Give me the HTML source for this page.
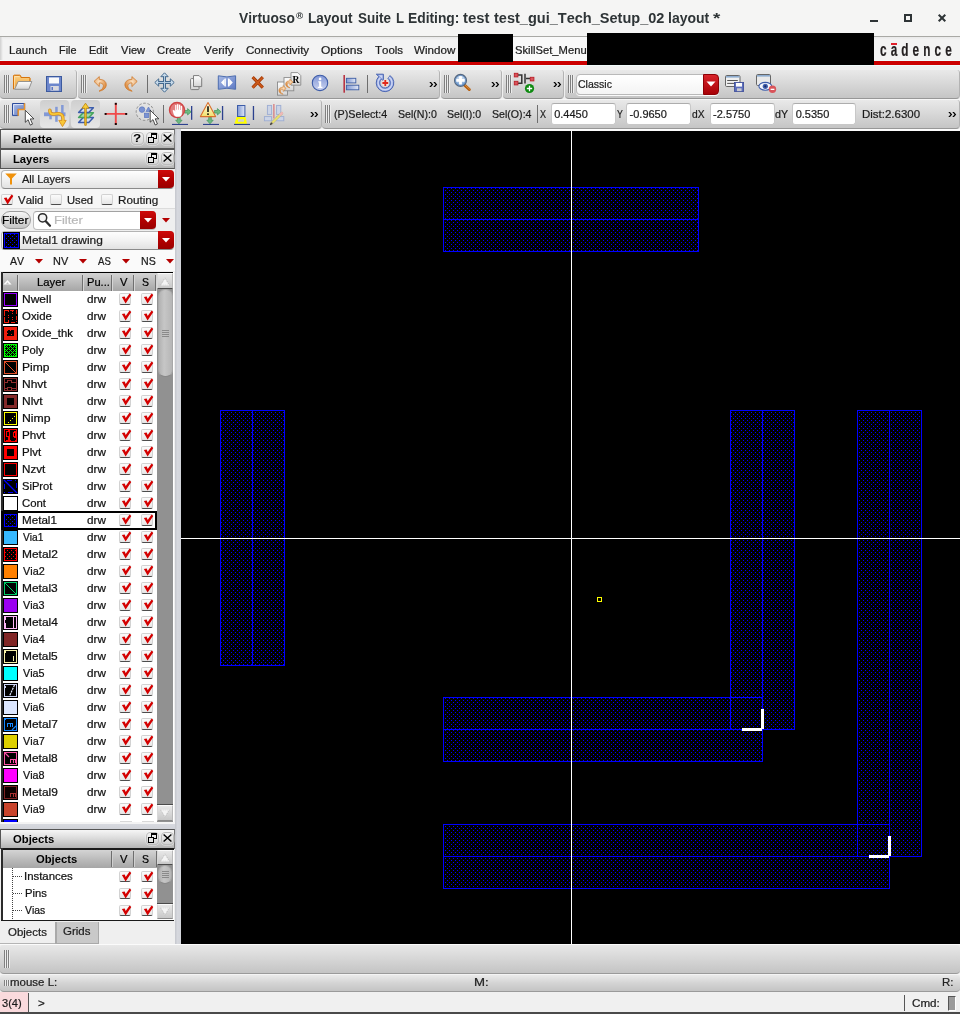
<!DOCTYPE html>
<html><head><meta charset="utf-8"><title>Virtuoso</title>
<style>
*{box-sizing:border-box;margin:0;padding:0}
html,body{width:960px;height:1014px;overflow:hidden;background:#efefef}
body{font-family:"Liberation Sans",sans-serif;font-size:12px;color:#1c1c1c;position:relative;font-kerning:none}
#root{position:absolute;left:0;top:0;width:960px;height:1014px;will-change:transform}
.a{position:absolute}
.t{position:absolute;white-space:nowrap;line-height:16px;height:16px;transform-origin:0 50%;-webkit-text-stroke:0.22px currentColor}
svg{position:absolute;overflow:visible}
</style></head><body><div id="root">
<div class="a" style="left:0px;top:0px;width:960px;height:36px;background:#f5f5f4"></div>
<span class="t" style="left:238.50px;top:10px;font-size:15px;font-weight:bold;-webkit-text-stroke:0;color:#2e3436;transform:scaleX(0.9194);">Virtuoso</span>
<span class="t" style="left:308.19px;top:10px;font-size:15px;font-weight:bold;-webkit-text-stroke:0;color:#2e3436;transform:scaleX(0.9034);">Layout</span>
<span class="t" style="left:357.53px;top:10px;font-size:15px;font-weight:bold;-webkit-text-stroke:0;color:#2e3436;transform:scaleX(0.9000);">Suite</span>
<span class="t" style="left:395.51px;top:10px;font-size:15px;font-weight:bold;-webkit-text-stroke:0;color:#2e3436;transform:scaleX(0.8805);">L</span>
<span class="t" style="left:408.17px;top:10px;font-size:15px;font-weight:bold;-webkit-text-stroke:0;color:#2e3436;transform:scaleX(0.9206);">Editing:</span>
<span class="t" style="left:463.15px;top:10px;font-size:15px;font-weight:bold;-webkit-text-stroke:0;color:#2e3436;transform:scaleX(0.9906);">test</span>
<span class="t" style="left:494.45px;top:10px;font-size:15px;font-weight:bold;-webkit-text-stroke:0;color:#2e3436;transform:scaleX(0.9687);">test_gui_Tech_Setup_02</span>
<span class="t" style="left:667.66px;top:10px;font-size:15px;font-weight:bold;-webkit-text-stroke:0;color:#2e3436;transform:scaleX(0.9329);">layout</span>
<span class="t" style="left:713.30px;top:10px;font-size:15px;font-weight:bold;-webkit-text-stroke:0;color:#2e3436;transform:scaleX(1.2479);">*</span>
<span class="t" style="left:295.90px;top:8px;font-size:9.5px;font-weight:bold;-webkit-text-stroke:0;color:#2e3436;transform:scaleX(1.0234);">®</span>
<svg style="left:860px;top:8px;width:100px;height:20px" viewBox="860 8 100 20"><g stroke="#2e3436" stroke-width="2" fill="none"><path d="M870 20.5h8" shape-rendering="crispEdges"/><rect x="905" y="15" width="6" height="6" shape-rendering="crispEdges"/><path d="M938.7 14.7l6.6 6.6M945.3 14.7l-6.6 6.6"/></g></svg>
<div class="a" style="left:0px;top:36px;width:960px;height:1px;background:#a9a9a5"></div>
<div class="a" style="left:0px;top:37px;width:960px;height:24px;background:linear-gradient(#e9e9e9,#f3f3f3 3px,#f3f3f3)"></div>
<div class="a" style="left:0px;top:37px;width:3px;height:24px;background:linear-gradient(90deg,#cfcfcf,#f3f3f3)"></div>
<span class="t" style="left:9.08px;top:42px;font-size:11px;transform:scaleX(1.0481);">Launch</span>
<span class="t" style="left:58.63px;top:42px;font-size:11px;transform:scaleX(0.9879);">File</span>
<span class="t" style="left:89.13px;top:42px;font-size:11px;transform:scaleX(0.9917);">Edit</span>
<span class="t" style="left:121.00px;top:42px;font-size:11px;transform:scaleX(1.0101);">View</span>
<span class="t" style="left:157.43px;top:42px;font-size:11px;transform:scaleX(1.0274);">Create</span>
<span class="t" style="left:204.00px;top:42px;font-size:11px;transform:scaleX(1.0545);">Verify</span>
<span class="t" style="left:245.62px;top:42px;font-size:11px;transform:scaleX(1.0539);">Connectivity</span>
<span class="t" style="left:320.72px;top:42px;font-size:11px;transform:scaleX(1.0920);">Options</span>
<span class="t" style="left:374.77px;top:42px;font-size:11px;transform:scaleX(1.0447);">Tools</span>
<span class="t" style="left:414.20px;top:42px;font-size:11px;transform:scaleX(1.0546);">Window</span>
<div class="a" style="left:513px;top:37px;width:74px;height:24px;background:#f9f9f9"></div>
<span class="t" style="left:514.55px;top:42px;font-size:11px;transform:scaleX(1.0189);">SkillSet_Menu</span>
<div class="a" style="left:0px;top:60px;width:960px;height:1px;background:#eefcfc"></div>
<div class="a" style="left:0px;top:61px;width:587px;height:4px;background:#cc0000"></div>
<div class="a" style="left:874px;top:61px;width:86px;height:4px;background:#cc0000"></div>
<div class="a" style="left:0px;top:65px;width:960px;height:1px;background:#f0fbfb"></div>
<div class="a" style="left:458px;top:34px;width:55px;height:27.7px;background:#000"></div>
<div class="a" style="left:587px;top:33px;width:287px;height:32px;background:#000"></div>
<span class="t" style="left:880px;top:40px;font-size:19px;font-weight:bold;color:#231f20;letter-spacing:6.6px;transform:scaleX(0.62);line-height:20px;height:20px">cadence</span>
<div class="a" style="left:891px;top:43px;width:6px;height:1.5px;background:#e0202a"></div>
<div class="a" style="left:0px;top:99px;width:960px;height:1px;background:#f6f6f6"></div>
<div class="a" style="left:0px;top:129px;width:960px;height:2px;background:#fbfbfb"></div>
<div class="a" style="left:0px;top:70px;width:77px;height:29px;background:linear-gradient(#e9e9e9,#d9d9d9 45%,#c5c5c5);border-bottom:1px solid #979797;border-right:1px solid #b3b3b3;border-radius:3px 3px 4px 4px;"></div>
<div class="a" style="left:78px;top:70px;width:362px;height:29px;background:linear-gradient(#e9e9e9,#d9d9d9 45%,#c5c5c5);border-bottom:1px solid #979797;border-right:1px solid #b3b3b3;border-radius:3px 3px 4px 4px;"></div>
<div class="a" style="left:441px;top:70px;width:61px;height:29px;background:linear-gradient(#e9e9e9,#d9d9d9 45%,#c5c5c5);border-bottom:1px solid #979797;border-right:1px solid #b3b3b3;border-radius:3px 3px 4px 4px;"></div>
<div class="a" style="left:503px;top:70px;width:61px;height:29px;background:linear-gradient(#e9e9e9,#d9d9d9 45%,#c5c5c5);border-bottom:1px solid #979797;border-right:1px solid #b3b3b3;border-radius:3px 3px 4px 4px;"></div>
<div class="a" style="left:565px;top:70px;width:395px;height:29px;background:linear-gradient(#e9e9e9,#d9d9d9 45%,#c5c5c5);border-bottom:1px solid #979797;border-right:1px solid #b3b3b3;border-radius:3px 3px 4px 4px;"></div>
<div class="a" style="left:0px;top:100px;width:322px;height:29px;background:linear-gradient(#e9e9e9,#d9d9d9 45%,#c5c5c5);border-bottom:1px solid #979797;border-right:1px solid #b3b3b3;border-radius:3px 3px 4px 4px;"></div>
<div class="a" style="left:322px;top:100px;width:638px;height:29px;background:linear-gradient(#e9e9e9,#d9d9d9 45%,#c5c5c5);border-bottom:1px solid #979797;border-right:1px solid #b3b3b3;border-radius:3px 3px 4px 4px;"></div>
<div class="a" style="left:4px;top:75px;width:1px;height:18px;background:#808080"></div><div class="a" style="left:5px;top:75px;width:1px;height:18px;background:#ededed"></div><div class="a" style="left:6px;top:75px;width:1px;height:18px;background:#808080"></div><div class="a" style="left:7px;top:75px;width:1px;height:18px;background:#ededed"></div><div class="a" style="left:8px;top:75px;width:1px;height:18px;background:#808080"></div><div class="a" style="left:9px;top:75px;width:1px;height:18px;background:#ededed"></div>
<div class="a" style="left:81px;top:75px;width:1px;height:18px;background:#808080"></div><div class="a" style="left:82px;top:75px;width:1px;height:18px;background:#ededed"></div><div class="a" style="left:83px;top:75px;width:1px;height:18px;background:#808080"></div><div class="a" style="left:84px;top:75px;width:1px;height:18px;background:#ededed"></div><div class="a" style="left:85px;top:75px;width:1px;height:18px;background:#808080"></div><div class="a" style="left:86px;top:75px;width:1px;height:18px;background:#ededed"></div>
<div class="a" style="left:444px;top:75px;width:1px;height:18px;background:#808080"></div><div class="a" style="left:445px;top:75px;width:1px;height:18px;background:#ededed"></div><div class="a" style="left:446px;top:75px;width:1px;height:18px;background:#808080"></div><div class="a" style="left:447px;top:75px;width:1px;height:18px;background:#ededed"></div><div class="a" style="left:448px;top:75px;width:1px;height:18px;background:#808080"></div><div class="a" style="left:449px;top:75px;width:1px;height:18px;background:#ededed"></div>
<div class="a" style="left:506px;top:75px;width:1px;height:18px;background:#808080"></div><div class="a" style="left:507px;top:75px;width:1px;height:18px;background:#ededed"></div><div class="a" style="left:508px;top:75px;width:1px;height:18px;background:#808080"></div><div class="a" style="left:509px;top:75px;width:1px;height:18px;background:#ededed"></div><div class="a" style="left:510px;top:75px;width:1px;height:18px;background:#808080"></div><div class="a" style="left:511px;top:75px;width:1px;height:18px;background:#ededed"></div>
<div class="a" style="left:568px;top:75px;width:1px;height:18px;background:#808080"></div><div class="a" style="left:569px;top:75px;width:1px;height:18px;background:#ededed"></div><div class="a" style="left:570px;top:75px;width:1px;height:18px;background:#808080"></div><div class="a" style="left:571px;top:75px;width:1px;height:18px;background:#ededed"></div><div class="a" style="left:572px;top:75px;width:1px;height:18px;background:#808080"></div><div class="a" style="left:573px;top:75px;width:1px;height:18px;background:#ededed"></div>
<div class="a" style="left:4px;top:105px;width:1px;height:18px;background:#808080"></div><div class="a" style="left:5px;top:105px;width:1px;height:18px;background:#ededed"></div><div class="a" style="left:6px;top:105px;width:1px;height:18px;background:#808080"></div><div class="a" style="left:7px;top:105px;width:1px;height:18px;background:#ededed"></div><div class="a" style="left:8px;top:105px;width:1px;height:18px;background:#808080"></div><div class="a" style="left:9px;top:105px;width:1px;height:18px;background:#ededed"></div>
<div class="a" style="left:325px;top:105px;width:1px;height:18px;background:#808080"></div><div class="a" style="left:326px;top:105px;width:1px;height:18px;background:#ededed"></div><div class="a" style="left:327px;top:105px;width:1px;height:18px;background:#808080"></div><div class="a" style="left:328px;top:105px;width:1px;height:18px;background:#ededed"></div><div class="a" style="left:329px;top:105px;width:1px;height:18px;background:#808080"></div><div class="a" style="left:330px;top:105px;width:1px;height:18px;background:#ededed"></div>
<svg style="left:429px;top:82px;width:9px;height:6px" viewBox="0 0 9 6"><path d="M0.3 0h1.7l2.2 2.5l-2.2 2.5h-1.7l2.2-2.5z M4.3 0h1.7l2.2 2.5l-2.2 2.5h-1.7l2.2-2.5z" fill="#000"/></svg>
<svg style="left:491px;top:82px;width:9px;height:6px" viewBox="0 0 9 6"><path d="M0.3 0h1.7l2.2 2.5l-2.2 2.5h-1.7l2.2-2.5z M4.3 0h1.7l2.2 2.5l-2.2 2.5h-1.7l2.2-2.5z" fill="#000"/></svg>
<svg style="left:553px;top:82px;width:9px;height:6px" viewBox="0 0 9 6"><path d="M0.3 0h1.7l2.2 2.5l-2.2 2.5h-1.7l2.2-2.5z M4.3 0h1.7l2.2 2.5l-2.2 2.5h-1.7l2.2-2.5z" fill="#000"/></svg>
<svg style="left:310px;top:112px;width:9px;height:6px" viewBox="0 0 9 6"><path d="M0.3 0h1.7l2.2 2.5l-2.2 2.5h-1.7l2.2-2.5z M4.3 0h1.7l2.2 2.5l-2.2 2.5h-1.7l2.2-2.5z" fill="#000"/></svg>
<svg style="left:948px;top:112px;width:9px;height:6px" viewBox="0 0 9 6"><path d="M0.3 0h1.7l2.2 2.5l-2.2 2.5h-1.7l2.2-2.5z M4.3 0h1.7l2.2 2.5l-2.2 2.5h-1.7l2.2-2.5z" fill="#000"/></svg>
<div class="a" style="left:147px;top:75px;width:1px;height:18px;background:#6e6e6e"></div>
<div class="a" style="left:367px;top:75px;width:1px;height:18px;background:#6e6e6e"></div>
<div class="a" style="left:163px;top:105px;width:1px;height:18px;background:#6e6e6e"></div>
<div class="a" style="left:537px;top:105px;width:1px;height:18px;background:#6e6e6e"></div>
<div class="a" style="left:40px;top:100px;width:29px;height:28px;background:linear-gradient(#cfcfcf,#dcdcdc 50%,#e6e6e6);border-radius:4px;"></div>
<div class="a" style="left:71px;top:100px;width:29px;height:28px;background:linear-gradient(#cfcfcf,#dcdcdc 50%,#e6e6e6);border-radius:4px;"></div>
<span class="t" style="left:334.05px;top:106px;font-size:11px;transform:scaleX(0.9783);">(P)Select:4</span>
<span class="t" style="left:397.78px;top:106px;font-size:11px;transform:scaleX(0.9648);">Sel(N):0</span>
<span class="t" style="left:446.58px;top:106px;font-size:11px;transform:scaleX(0.9610);">Sel(I):0</span>
<span class="t" style="left:491.58px;top:106px;font-size:11px;transform:scaleX(0.9637);">Sel(O):4</span>
<span class="t" style="left:540.12px;top:106px;font-size:11px;transform:scaleX(0.8225);">X</span>
<span class="t" style="left:616.83px;top:106px;font-size:11px;transform:scaleX(0.7937);">Y</span>
<span class="t" style="left:692.09px;top:106px;font-size:11px;transform:scaleX(0.9324);">dX</span>
<span class="t" style="left:775.07px;top:106px;font-size:11px;transform:scaleX(0.9713);">dY</span>
<span class="t" style="left:861.58px;top:106px;font-size:11px;transform:scaleX(1.0434);">Dist:2.6300</span>
<div class="a" style="left:550.5px;top:103px;width:65px;height:22px;background:#fff;border:1px solid #c8c8c8;border-top-color:#adadad;border-radius:3px;"></div>
<span class="t" style="left:554.17px;top:106px;font-size:11px;">0.4450</span>
<div class="a" style="left:626px;top:103px;width:65px;height:22px;background:#fff;border:1px solid #c8c8c8;border-top-color:#adadad;border-radius:3px;"></div>
<span class="t" style="left:629.56px;top:106px;font-size:11px;">-0.9650</span>
<div class="a" style="left:709.5px;top:103px;width:65px;height:22px;background:#fff;border:1px solid #c8c8c8;border-top-color:#adadad;border-radius:3px;"></div>
<span class="t" style="left:713.06px;top:106px;font-size:11px;">-2.5750</span>
<div class="a" style="left:792px;top:103px;width:64.2px;height:22px;background:#fff;border:1px solid #c8c8c8;border-top-color:#adadad;border-radius:3px;"></div>
<span class="t" style="left:795.67px;top:106px;font-size:11px;">0.5350</span>
<div class="a" style="left:575.5px;top:73.5px;width:143.5px;height:21px;background:linear-gradient(#fff,#f4f4f4);border:1px solid #b9b9b9;border-radius:4px;box-shadow:0 1px 0 #fafafa"></div>
<div class="a" style="left:703px;top:73.5px;width:16px;height:21px;background:linear-gradient(#d8242a,#a80006);border-radius:0 4px 4px 0;border:1px solid #8e0005"></div>
<svg style="left:706px;top:81px;width:10px;height:6px" viewBox="0 0 10 6"><path d="M0.5 0.5h9l-4.5 5z" fill="#fff"/></svg>
<span class="t" style="left:578.27px;top:76px;font-size:11px;transform:scaleX(0.9582);">Classic</span>
<svg style="left:0;top:66px;width:960px;height:64px" viewBox="0 66 960 64">
<defs>
<linearGradient id="gOr" x1="0" y1="0" x2="0" y2="1"><stop offset="0" stop-color="#fbd48a"/><stop offset="1" stop-color="#ee9a2c"/></linearGradient>
<linearGradient id="gBl" x1="0" y1="0" x2="1" y2="1"><stop offset="0" stop-color="#a9bbe6"/><stop offset="1" stop-color="#5d79c4"/></linearGradient>
<linearGradient id="gBlH" x1="0" y1="0" x2="1" y2="0"><stop offset="0" stop-color="#7f98d4"/><stop offset="1" stop-color="#e2e8f6"/></linearGradient>
<linearGradient id="gPg" x1="0" y1="0" x2="0" y2="1"><stop offset="0" stop-color="#ffffff"/><stop offset="1" stop-color="#d4d4d4"/></linearGradient>
<linearGradient id="gYl" x1="0" y1="0" x2="0" y2="1"><stop offset="0" stop-color="#fffef0"/><stop offset="1" stop-color="#f1e06a"/></linearGradient>
<radialGradient id="gAr" cx="0.4" cy="0.35" r="0.7"><stop offset="0" stop-color="#fbe0c0"/><stop offset="1" stop-color="#d88232"/></radialGradient>
<linearGradient id="gLens" x1="0" y1="0" x2="0" y2="1"><stop offset="0" stop-color="#e6eef8"/><stop offset="1" stop-color="#6f9bd0"/></linearGradient>
<linearGradient id="gInfo" x1="0" y1="0" x2="0" y2="1"><stop offset="0" stop-color="#8096d6"/><stop offset="1" stop-color="#cdd5f0"/></linearGradient>
<g id="undo"><path d="M94 81.4L99.3 76.6L99.3 79.4C104.6 79.3 106.8 82.6 106.2 85.8C105.6 88.8 102.6 90.7 99 91.2C102.4 89.3 103.6 87.4 103.4 85.6C103.1 83.6 101.6 82.9 99.3 82.9L99.3 86.6Z" fill="url(#gAr)" stroke="#cf7a2c" stroke-width="0.8"/></g>
<g id="cursor"><path d="M0 0V12L2.8 9.4L5 14.8L7.2 13.8L5 8.6H8.6Z" fill="#fff" stroke="#1a1a1a" stroke-width="0.75" stroke-linejoin="round"/></g>
<g id="garr"><path d="M0 -1.3h3v-1.9l3.6 3.2l-3.6 3.2v-1.9h-3z" fill="#6dba82" stroke="#3f9458" stroke-width="0.7"/></g>
</defs>
<!-- folder -->
<path d="M13.5 89V76.2q0-0.9 0.9-0.9h5.2q0.8 0 1 0.8l0.4 1.4h8q0.9 0 0.9 0.9V81" fill="url(#gOr)" stroke="#d6740c" stroke-width="1"/>
<path d="M13.5 89V76.2q0-0.9 0.9-0.9h5.2q0.8 0 1 0.8l0.4 1.4h8q0.9 0 0.9 0.9V82H18z" fill="url(#gOr)"/>
<path d="M18.2 81.5H31.8L28.8 89.3H14.6Z" fill="url(#gPg)" stroke="#8a8a8a" stroke-width="0.9"/>
<path d="M13.5 89.3V76.2q0-0.9 0.9-0.9h5.2q0.8 0 1 0.8l0.4 1.4h8q0.9 0 0.9 0.9V81" stroke="#d6740c" stroke-width="1" fill="none"/><path d="M14.6 88V76.6h4.8" stroke="#fde6b8" stroke-width="0.8" fill="none"/>
<!-- floppy -->
<rect x="46.5" y="76.5" width="15" height="15" fill="#6c86cc" stroke="#3c5a9e" stroke-width="1"/>
<rect x="49" y="77.5" width="10" height="6" fill="#fafafa"/>
<rect x="50.5" y="86" width="8.3" height="4.6" fill="#d9d9de"/>
<rect x="51.5" y="87" width="1.5" height="3" fill="#5a74c4"/>
<!-- undo / redo -->
<use href="#undo"/>
<use href="#undo" transform="translate(231.2 0) scale(-1 1)"/>
<!-- move -->
<g stroke="#44698e" stroke-width="3" fill="none" stroke-linecap="butt"><path d="M164.5 75.5V89.5M157.5 82.5H171.5"/></g>
<path d="M164.5 72.8l3.7 3.9h-7.4zM164.5 92.2l3.7-3.9h-7.4zM154.8 82.5l3.9-3.7v7.4zM174.2 82.5l-3.9-3.7v7.4z" fill="#cfe0ee" stroke="#44698e" stroke-width="1"/>
<g stroke="#b5cde2" stroke-width="1" fill="none"><path d="M164.5 75.5V89.5M157.5 82.5H171.5"/></g>
<!-- copy -->
<rect x="190.6" y="78.6" width="8.4" height="11" rx="0.8" fill="url(#gPg)" stroke="#7d7d7d" stroke-width="1"/>
<path d="M193.5 75.6h5.6l2.6 2.6v8.4h-8.2z" fill="url(#gPg)" stroke="#7d7d7d" stroke-width="1"/>
<!-- stretch -->
<path d="M218.3 75.8Q227 78 235.6 75.8V89.3Q227 87.2 218.3 89.3Z" fill="url(#gBl)" stroke="#4c6cae" stroke-width="1"/>
<path d="M221 82.5l3.7-3.9v7.8zM232.8 82.5l-3.7-3.9v7.8z" fill="#fff"/>
<path d="M225.3 78.4v8.2M228.5 78.4v8.2" stroke="#fff" stroke-width="1.1"/>
<!-- delete X -->
<path d="M252.6 77.2l10.2 10.4M262.8 77.2l-10.2 10.4" stroke="#a23806" stroke-width="3.1" stroke-linecap="butt"/>
<path d="M252.6 77.2l10.2 10.4M262.8 77.2l-10.2 10.4" stroke="#cc5a1a" stroke-width="1.5" stroke-linecap="butt"/>
<!-- repeat -->
<rect x="277.5" y="82" width="10" height="13.2" fill="url(#gPg)" stroke="#8a8a8a" stroke-width="0.9"/>
<rect x="284" y="77.6" width="9.8" height="13.2" fill="url(#gPg)" stroke="#8a8a8a" stroke-width="0.9"/>
<path d="M291 72.6h6.8l3 3v9.6h-9.8z" fill="url(#gPg)" stroke="#8a8a8a" stroke-width="0.9"/>
<text x="292.6" y="82.7" font-family="Liberation Serif" font-weight="bold" font-size="9.5" fill="#000">R</text>
<use href="#undo" transform="translate(286.2 88.4) scale(-0.6 0.6) translate(-94 -81.4)"/>
<use href="#undo" transform="translate(293 82) scale(-0.6 0.6) translate(-94 -81.4)"/>
<!-- info -->
<circle cx="320" cy="82.9" r="7.7" fill="url(#gInfo)" stroke="#3d5ca8" stroke-width="1.1"/>
<circle cx="320.1" cy="78.9" r="1.35" fill="#fff"/>
<path d="M318.3 81.2h2.9v5.6h1.2v1.2h-4.6v-1.2h1.3v-4.4h-0.8z" fill="#fff"/>
<!-- align -->
<rect x="343.4" y="75" width="1.6" height="17.7" fill="#b83444"/>
<rect x="346.4" y="78.3" width="9.4" height="4.6" fill="url(#gBlH)" stroke="#3c5ca4" stroke-width="0.9"/>
<rect x="346.4" y="85.2" width="12.4" height="4.6" fill="url(#gBlH)" stroke="#3c5ca4" stroke-width="0.9"/>
<!-- rotate -->
<path d="M378.8 76.6A8.8 8.8 0 1 0 390.05 75.6L387.98 78.54A5.2 5.2 0 1 1 381.3 79.1L383.4 81L383.4 74.2L376.3 74.2Z" fill="#8fa2dd" stroke="#3f5cae" stroke-width="0.9" stroke-linejoin="round"/>
<path d="M380.1 77.9A7 7 0 1 0 389 77.1" fill="none" stroke="#cdd6f4" stroke-width="1.5"/>
<path d="M378.6 75.2h3.8v3.6z" fill="#cdd6f4"/>
<circle cx="385.3" cy="83" r="3.4" fill="#fbe4de" opacity="0.8"/>
<path d="M385.3 80.1v5.8M382.4 83h5.8" stroke="#e0281c" stroke-width="1.8"/>
<!-- magnifier -->
<path d="M464.8 85.4l4.6 4.2" stroke="#b85e0c" stroke-width="2.8" stroke-linecap="round"/><path d="M465.2 85.2l4.4 4" stroke="#e09a50" stroke-width="0.8" stroke-linecap="round"/>
<circle cx="460.5" cy="80.4" r="5.9" fill="url(#gLens)" stroke="#566880" stroke-width="1.3"/>
<circle cx="460.5" cy="80.4" r="4.9" fill="none" stroke="#5d8cc4" stroke-width="0.9"/>
<path d="M460.5 76.2v8.4M456.3 80.4h8.4" stroke="#fff" stroke-width="2.8"/>
<!-- connect -->
<g fill="none" stroke="#333" stroke-width="1.5"><path d="M518 75h3.8v8.3H518M525 73.8v9.8M526 78.6h4"/></g>
<g fill="#d8555c" stroke="#bb2029" stroke-width="0.9"><rect x="514.3" y="73.3" width="3.6" height="3.6"/><rect x="514.3" y="81.3" width="3.6" height="3.6"/><rect x="530.3" y="77.3" width="3.6" height="3.6"/></g>
<circle cx="529.5" cy="88.5" r="4.6" fill="#0d8a10"/>
<path d="M529.5 85.8v5.4M526.8 88.5h5.4" stroke="#fff" stroke-width="1.3"/>
<!-- save window -->
<rect x="725.5" y="75.5" width="14.5" height="11" rx="1.2" fill="#f0f0f0" stroke="#666" stroke-width="1"/>
<rect x="726" y="76" width="13.5" height="1.6" fill="#8eaccf"/>
<path d="M727.2 80.5h10.6M727.2 83.4h8" stroke="#555" stroke-width="1"/>
<rect x="734.4" y="82.4" width="9.2" height="9.2" fill="#5c6ebc" stroke="#3b4c96" stroke-width="0.8"/>
<rect x="736" y="83" width="6" height="3.6" fill="#fbfbfb"/>
<rect x="737" y="88.3" width="4.6" height="2.8" fill="#c9c9cf"/>
<!-- eye window -->
<rect x="756.5" y="74.5" width="14" height="11" rx="1.2" fill="#e9e9e9" stroke="#666" stroke-width="1"/>
<rect x="757" y="75" width="13" height="1.6" fill="#8eaccf"/>
<ellipse cx="765.3" cy="86.3" rx="6.4" ry="3.9" fill="#f4f6fc" stroke="#3d5cab" stroke-width="1.1"/>
<circle cx="765.3" cy="86.3" r="2.6" fill="#3f5eae"/>
<circle cx="765.3" cy="86.3" r="1.1" fill="#1d2b5e"/>
<circle cx="772.5" cy="89.3" r="3.7" fill="#d9545a"/>
<rect x="770.6" y="88.7" width="3.8" height="1.3" fill="#fff"/>
<!-- ROW 2 -->
<!-- select -->
<path d="M12.5 103.5H24.6V109.4H18.2V115.6H12.5Z" fill="url(#gBl)" stroke="#2c4c9c" stroke-width="1"/>
<path d="M24.5 103.3V109.4H18.2V115.8" fill="none" stroke="#e8932c" stroke-width="1.5"/><path d="M13.6 114.4V104.6H23" fill="none" stroke="#e6ecfa" stroke-width="0.9"/>
<use href="#cursor" transform="translate(25.3 110.3)"/>
<!-- route -->
<g fill="#8299d6"><rect x="44" y="112.4" width="21.5" height="3.8"/><rect x="49.3" y="109.6" width="2.5" height="9.7"/><rect x="55.2" y="106.8" width="2.5" height="15"/><rect x="61.1" y="105" width="2.5" height="14.6"/></g>
<path d="M49.8 110.2C49.6 112.6 50.8 114 53 114.2C55.4 114.4 57.2 113.4 59.6 113.8C62.6 114.3 63.4 116.8 63 120.6" fill="none" stroke="#d8901e" stroke-width="3.3" stroke-linecap="round"/>
<path d="M58.8 120.4h7.4l-3.7 6.2z" fill="#f9c838" stroke="#d8901e" stroke-width="0.9" stroke-linejoin="round"/>
<path d="M49.8 110.2C49.6 112.6 50.8 114 53 114.2C55.4 114.4 57.2 113.4 59.6 113.8C62.6 114.3 63.4 116.8 63 121" fill="none" stroke="#f9c838" stroke-width="1.7" stroke-linecap="round"/>
<!-- layers -->
<path d="M78.6 122.5L83.2 117.6H93.4L88.8 122.5Z" fill="#d6def4" stroke="#3b5cab" stroke-width="1.5" stroke-linejoin="round"/>
<path d="M78.6 117.6L83.2 112.7H93.4L88.8 117.6Z" fill="#9fd8ae" stroke="#46a45e" stroke-width="1.5" stroke-linejoin="round"/>
<path d="M78.6 112.6L83.2 107.8H93.4L88.8 112.6Z" fill="#d6def4" stroke="#3b5cab" stroke-width="1.5" stroke-linejoin="round"/>
<path d="M84.7 125.3V108.2H82L85.5 103.2L89 108.2H86.3V125.3Z" fill="#f9cc34" stroke="#b8820c" stroke-width="0.8" stroke-linejoin="round"/>
<!-- red cross -->
<path d="M105 113.9H126.7M115.8 103V124.7" stroke="#f04a4a" stroke-width="1.9"/>
<g fill="#1a0505"><rect x="104.6" y="113" width="2" height="1.9"/><rect x="125.2" y="113" width="2" height="1.9"/><rect x="114.8" y="102.8" width="2" height="2"/><rect x="114.8" y="123" width="2" height="2"/></g>
<!-- select by area -->
<circle cx="144.8" cy="111.8" r="8.6" fill="#e2e2e2" fill-opacity="0.6" stroke="#858585" stroke-width="0.9" stroke-dasharray="2.6 1.7"/>
<circle cx="142" cy="109.6" r="2.8" fill="#7a92d2" stroke="#5672bc" stroke-width="0.6"/>
<path d="M148.5 107l2.6 4.5h-5.2z" fill="#7a92d2" stroke="#5672bc" stroke-width="0.6"/>
<rect x="144.3" y="113.1" width="4.5" height="4.6" fill="#7a92d2" stroke="#5672bc" stroke-width="0.6"/>
<use href="#cursor" transform="translate(150.2 110.2)"/>
<!-- stop -->
<use href="#garr" transform="translate(184.6 111.8)"/>
<use href="#garr" transform="translate(178.9 117.2) rotate(90)"/>
<circle cx="177" cy="110" r="7.5" fill="#e27c7c" stroke="#cf4444" stroke-width="1.4"/>
<g transform="translate(177 110.4) scale(1.15) translate(-177 -110.4)"><path d="M173.2 110.4l1.2-0.6l1 1.6v-5.6h1.1v4h0.5v-4.8h1.1v4.8h0.5v-4.4h1.1v4.6h0.5v-3.4h1.1v6.2q0 2.6-2.4 3.2h-2.6q-1.4-0.4-2.2-2.2z" fill="#fff"/></g>
<rect x="172" y="123.9" width="16" height="1.1" fill="#2c418e"/>
<rect x="191" y="106" width="1.3" height="13.8" fill="#2c418e"/>
<!-- warning -->
<use href="#garr" transform="translate(214.4 111.8)"/>
<use href="#garr" transform="translate(210 117.2) rotate(90)"/>
<path d="M208 102.6L215.6 116.6H200.4Z" fill="url(#gYl)" stroke="#d9702e" stroke-width="1.1" stroke-linejoin="round"/>
<path d="M208 106.2v5.8" stroke="#000" stroke-width="1.5"/><rect x="207.2" y="113.4" width="1.6" height="1.5" fill="#000"/>
<rect x="203" y="123.9" width="16" height="1.1" fill="#2c418e"/>
<rect x="221.9" y="106" width="1.3" height="14" fill="#2c418e"/>
<!-- blue rect + yellow -->
<rect x="237.5" y="105.5" width="7.4" height="11" fill="url(#gBlH)" stroke="#3c5ca8" stroke-width="1"/>
<path d="M236.5 117H245.5L247 123.8H234.6Z M238 119.3V121.8H244V119.3Z" fill="#ffff00" fill-rule="evenodd"/>
<rect x="234" y="123.9" width="16" height="1.1" fill="#2c418e"/>
<rect x="252.8" y="106" width="1.3" height="14" fill="#2c418e"/>
<!-- disabled align -->
<g fill="#ccd4e6" stroke="#9cacd2" stroke-width="0.9"><rect x="267.4" y="105.4" width="4.2" height="9"/><rect x="276.6" y="105.4" width="4.2" height="9"/><rect x="264.4" y="116.6" width="7.2" height="4.2"/><rect x="276.6" y="116.6" width="7.2" height="4.2"/></g>
<rect x="273.1" y="104" width="1.5" height="14.4" fill="#d98a8c"/>
<path d="M271.2 123.8L281.8 113.2" stroke="#b9b18c" stroke-width="2.8" stroke-linecap="round"/>
<path d="M272.4 122.6L280.4 114.6" stroke="#ebe36a" stroke-width="1.8"/>
<path d="M280.4 114.6L281.9 113.1" stroke="#f0b8b8" stroke-width="2.4" stroke-linecap="round"/>
<path d="M270.7 124.3l1-1" stroke="#444" stroke-width="1.6" stroke-linecap="round"/>
</svg>

<div class="a" style="left:0px;top:129px;width:175px;height:815px;background:#efefef"></div>
<div class="a" style="left:175px;top:129px;width:6px;height:815px;background:linear-gradient(90deg,#c4c6cc,#d6d8de 40%,#d2d4da)"></div>
<div class="a" style="left:0px;top:129px;width:175px;height:20px;background:linear-gradient(#f6f6f6,#dcdcdc 45%,#b4b4b4);border:1px solid #555;border-right-color:#777;"></div><span class="t" style="left:12.78px;top:131px;font-size:11px;font-weight:bold;-webkit-text-stroke:0;color:#000;transform:scaleX(1.0886);">Palette</span><div class="a" style="left:130.5px;top:131.5px;width:13px;height:13px;background:linear-gradient(#f4f4f4,#d4d4d4);border:1px solid #bcbcbc;border-radius:4px;box-shadow:0 0 0 0.5px rgba(255,255,255,.6)"></div><span class="t" style="left:133.06px;top:130px;font-size:11px;font-weight:bold;-webkit-text-stroke:0;color:#000;transform:scaleX(1.2238);">?</span><div class="a" style="left:145.5px;top:131.5px;width:13px;height:13px;background:linear-gradient(#f4f4f4,#d4d4d4);border:1px solid #bcbcbc;border-radius:4px;box-shadow:0 0 0 0.5px rgba(255,255,255,.6)"></div><svg style="left:148px;top:133px;width:9px;height:10px" viewBox="0 0 9 10" shape-rendering="crispEdges"><g fill="none" stroke="#000"><rect x="3" y="1" width="5" height="4.5"/><path d="M2.5 0.5h6"/><rect x="0.5" y="4.5" width="5" height="4.5" fill="#e6e6e6"/><path d="M0 4h6"/></g></svg><div class="a" style="left:160.5px;top:131.5px;width:13px;height:13px;background:linear-gradient(#f4f4f4,#d4d4d4);border:1px solid #bcbcbc;border-radius:4px;box-shadow:0 0 0 0.5px rgba(255,255,255,.6)"></div><svg style="left:162.6px;top:134px;width:9px;height:8px" viewBox="0 0 9 8"><path d="M0.6 0.4L8.4 7.6M8.4 0.4L0.6 7.6" stroke="#000" stroke-width="1.4" fill="none"/></svg>
<div class="a" style="left:0px;top:149px;width:175px;height:20px;background:linear-gradient(#f6f6f6,#dcdcdc 45%,#b4b4b4);border:1px solid #555;border-right-color:#777;"></div><span class="t" style="left:12.83px;top:151px;font-size:11px;font-weight:bold;-webkit-text-stroke:0;color:#000;transform:scaleX(1.0224);">Layers</span><div class="a" style="left:145.5px;top:151.5px;width:13px;height:13px;background:linear-gradient(#f4f4f4,#d4d4d4);border:1px solid #bcbcbc;border-radius:4px;box-shadow:0 0 0 0.5px rgba(255,255,255,.6)"></div><svg style="left:148px;top:153px;width:9px;height:10px" viewBox="0 0 9 10" shape-rendering="crispEdges"><g fill="none" stroke="#000"><rect x="3" y="1" width="5" height="4.5"/><path d="M2.5 0.5h6"/><rect x="0.5" y="4.5" width="5" height="4.5" fill="#e6e6e6"/><path d="M0 4h6"/></g></svg><div class="a" style="left:160.5px;top:151.5px;width:13px;height:13px;background:linear-gradient(#f4f4f4,#d4d4d4);border:1px solid #bcbcbc;border-radius:4px;box-shadow:0 0 0 0.5px rgba(255,255,255,.6)"></div><svg style="left:162.6px;top:154px;width:9px;height:8px" viewBox="0 0 9 8"><path d="M0.6 0.4L8.4 7.6M8.4 0.4L0.6 7.6" stroke="#000" stroke-width="1.4" fill="none"/></svg>
<div class="a" style="left:1px;top:170px;width:173px;height:18.5px;background:linear-gradient(#fefefe,#f2f2f2 50%,#e2e2e2);border:1px solid #b4b4b4;border-bottom-color:#8a8a8a;border-radius:4px"></div>
<div class="a" style="left:158px;top:170.2px;width:16px;height:18px;background:linear-gradient(#cf0a0a,#b00000 55%,#9a0000);border-radius:0 4px 4px 0"></div><svg style="left:162px;top:177px;width:8px;height:5px" viewBox="0 0 8 5"><path d="M0 0h8l-4 4.6z" fill="#fff"/></svg>
<svg style="left:5px;top:173px;width:12px;height:12px" viewBox="0 0 12 12"><path d="M0.2 0.4H11.8L7 5.6V11.6L5 11.6V5.6Z" fill="#f0920c"/></svg>
<span class="t" style="left:22.20px;top:171px;font-size:11px;transform:scaleX(0.9987);">All Layers</span>
<div class="a" style="left:0px;top:189px;width:175px;height:20px;background:#f6f6f6;border-bottom:1px solid #dcdcdc"></div>
<div class="a" style="left:1px;top:193.8px;width:12px;height:11.5px;background:linear-gradient(#fbfbfb,#e6e6e6);border:1px solid #d2d2d2;border-bottom:1.5px solid #4c4c4c;border-radius:2px"></div><svg style="left:1px;top:193.8px;width:13px;height:11px" viewBox="0 0 13 11"><path d="M2.9 4.1L5.7 3.5L6.7 6.1L10.6 0.5L12.3 1.9L6.6 10.4Z" fill="#d40000"/></svg>
<span class="t" style="left:18.30px;top:192px;font-size:11px;transform:scaleX(1.0396);">Valid</span>
<div class="a" style="left:49.7px;top:193.8px;width:12px;height:11.5px;background:linear-gradient(#fbfbfb,#e6e6e6);border:1px solid #d2d2d2;border-bottom:1.5px solid #4c4c4c;border-radius:2px"></div>
<span class="t" style="left:66.72px;top:192px;font-size:11px;transform:scaleX(1.0160);">Used</span>
<div class="a" style="left:100.6px;top:193.8px;width:12px;height:11.5px;background:linear-gradient(#fbfbfb,#e6e6e6);border:1px solid #d2d2d2;border-bottom:1.5px solid #4c4c4c;border-radius:2px"></div>
<span class="t" style="left:117.56px;top:192px;font-size:11px;transform:scaleX(1.0629);">Routing</span>
<div class="a" style="left:0.5px;top:210.8px;width:30px;height:18px;background:linear-gradient(#f6f6f6,#dedede 50%,#c4c4c4);border:1px solid #9c9c9c;border-radius:9px"></div>
<span class="t" style="left:1.85px;top:212px;font-size:11px;color:#000;transform:scaleX(1.0798);">Filter</span>
<div class="a" style="left:33.3px;top:210.5px;width:123px;height:19px;background:#fff;border:1px solid #bdbdbd;border-top-color:#a2a2a2;border-radius:4px"></div>
<svg style="left:36px;top:211px;width:17px;height:17px" viewBox="36 211 17 17"><circle cx="42.6" cy="217.8" r="4.1" fill="#f4f4f4" stroke="#2e2e2e" stroke-width="1.5"/><path d="M45.8 221.2L50 225.8" stroke="#2e2e2e" stroke-width="2.2" stroke-linecap="round"/></svg>
<span class="t" style="left:53.76px;top:212px;font-size:11px;color:#b9b9b9;transform:scaleX(1.1822);">Filter</span>
<div class="a" style="left:140px;top:211px;width:16px;height:18.2px;background:linear-gradient(#cf0a0a,#b00000 55%,#9a0000);border-radius:0 4px 4px 0"></div><svg style="left:144px;top:217.9px;width:8px;height:5px" viewBox="0 0 8 5"><path d="M0 0h8l-4 4.6z" fill="#fff"/></svg>
<svg style="left:162px;top:218px;width:8px;height:5px" viewBox="0 0 8 5"><path d="M0 0h8l-4 4.4z" fill="#b40000"/></svg>
<div class="a" style="left:1px;top:231px;width:173px;height:18.5px;background:linear-gradient(#fefefe,#f2f2f2 50%,#e2e2e2);border:1px solid #b4b4b4;border-bottom-color:#8a8a8a;border-radius:4px"></div>
<div class="a" style="left:158px;top:231.3px;width:16px;height:18px;background:linear-gradient(#cf0a0a,#b00000 55%,#9a0000);border-radius:0 4px 4px 0"></div><svg style="left:162px;top:238.1px;width:8px;height:5px" viewBox="0 0 8 5"><path d="M0 0h8l-4 4.6z" fill="#fff"/></svg>
<svg style="left:3px;top:232px;width:17px;height:17px" viewBox="3 232 17 17" shape-rendering="crispEdges"><rect x="3" y="232" width="17" height="17" fill="#000"/><rect x="4.5" y="233.5" width="14" height="14" fill="url(#stA)" stroke="#00f"/></svg>
<span class="t" style="left:22.45px;top:232px;font-size:11px;transform:scaleX(1.0843);">Metal1 drawing</span>
<div class="a" style="left:0px;top:250px;width:175px;height:21px;background:#fafafa"></div>
<span class="t" style="left:10.10px;top:253px;font-size:11px;transform:scaleX(0.9596);">AV</span>
<svg style="left:35px;top:259px;width:8px;height:5px" viewBox="0 0 8 5"><path d="M0 0h8l-4 4.4z" fill="#b40000"/></svg>
<span class="t" style="left:52.83px;top:253px;font-size:11px;transform:scaleX(0.9924);">NV</span>
<svg style="left:79.2px;top:259px;width:8px;height:5px" viewBox="0 0 8 5"><path d="M0 0h8l-4 4.4z" fill="#b40000"/></svg>
<span class="t" style="left:98.00px;top:253px;font-size:11px;transform:scaleX(0.8741);">AS</span>
<svg style="left:122px;top:259px;width:8px;height:5px" viewBox="0 0 8 5"><path d="M0 0h8l-4 4.4z" fill="#b40000"/></svg>
<span class="t" style="left:140.65px;top:253px;font-size:11px;transform:scaleX(0.9664);">NS</span>
<svg style="left:166px;top:259px;width:8px;height:5px" viewBox="0 0 8 5"><path d="M0 0h8l-4 4.4z" fill="#b40000"/></svg>
<div class="a" style="left:1px;top:272px;width:173px;height:550px;background:#fff"></div>
<div class="a" style="left:1px;top:272px;width:172px;height:1px;background:#000"></div>
<div class="a" style="left:1px;top:272px;width:1.5px;height:550px;background:#2a2a2a"></div>
<div class="a" style="left:2.5px;top:273px;width:154.5px;height:18px;background:linear-gradient(#d4d4d4,#bcbcbc 50%,#a6a6a6);"></div>
<div class="a" style="left:17px;top:275px;width:1px;height:16px;background:#707070"></div><div class="a" style="left:18px;top:275px;width:1px;height:16px;background:#d6d6d6"></div>
<div class="a" style="left:82px;top:275px;width:1px;height:16px;background:#707070"></div><div class="a" style="left:83px;top:275px;width:1px;height:16px;background:#d6d6d6"></div>
<div class="a" style="left:111px;top:275px;width:1px;height:16px;background:#707070"></div><div class="a" style="left:112px;top:275px;width:1px;height:16px;background:#d6d6d6"></div>
<div class="a" style="left:133px;top:275px;width:1px;height:16px;background:#707070"></div><div class="a" style="left:134px;top:275px;width:1px;height:16px;background:#d6d6d6"></div>
<div class="a" style="left:155px;top:275px;width:1px;height:16px;background:#707070"></div><div class="a" style="left:156px;top:275px;width:1px;height:16px;background:#d6d6d6"></div>
<svg style="left:3px;top:279px;width:9px;height:6px" viewBox="0 0 9 6"><path d="M0.4 5.4L4.5 0.9L8.6 5.4Z" fill="#fdfdfd"/><path d="M2.6 5.4L4.5 3.3L6.4 5.4Z" fill="#c4c4c4"/></svg>
<span class="t" style="left:36.60px;top:274px;font-size:11px;color:#000;transform:scaleX(1.0260);">Layer</span>
<span class="t" style="left:86.61px;top:274px;font-size:11px;color:#000;transform:scaleX(1.0101);">Pu...</span>
<span class="t" style="left:119.50px;top:274px;font-size:11px;color:#000;transform:scaleX(1.0176);">V</span>
<span class="t" style="left:142.08px;top:274px;font-size:11px;color:#000;transform:scaleX(0.9553);">S</span>
<div class="a" style="left:157px;top:273px;width:16px;height:549px;background:#919191"></div>
<div class="a" style="left:157px;top:273px;width:16px;height:16px;background:linear-gradient(#e8e8e8,#c8c8c8);border-top:1px solid #fafafa;border-left:1px solid #d8d8d8;border-right:1px solid #b8b8b8;border-bottom:1px solid #4a4a4a;"></div>
<svg style="left:160px;top:277px;width:10px;height:9px" viewBox="0 0 10 9"><path d="M0.8 8L5 0.9L9.2 8Z" fill="#f4f4f4" stroke="#a8a8a8" stroke-width="0.7" stroke-dasharray="1 1"/><path d="M0.8 8H9.2" stroke="#f8f8f8" stroke-width="0.9"/></svg>
<div class="a" style="left:157px;top:805px;width:16px;height:16px;background:linear-gradient(#e8e8e8,#c8c8c8);border-top:1px solid #fafafa;border-left:1px solid #d8d8d8;border-right:1px solid #b8b8b8;border-bottom:1px solid #8a8a8a;box-shadow:0 -1px 0 #4a4a4a;"></div>
<svg style="left:160px;top:809px;width:10px;height:9px" viewBox="0 0 10 9"><path d="M0.8 1L5 8.1L9.2 1Z" fill="#f4f4f4" stroke="#a8a8a8" stroke-width="0.7" stroke-dasharray="1 1"/><path d="M0.8 1H9.2" stroke="#f8f8f8" stroke-width="0.9"/></svg>
<div class="a" style="left:158px;top:289px;width:14.5px;height:88px;background:linear-gradient(90deg,#b2b2b2,#c6c6c6 40%,#b6b6b6);border-radius:7px;border:1px solid #a8a8a8;border-bottom-color:#888"></div>
<div class="a" style="left:161.5px;top:329.5px;width:7px;height:1px;background:#8a8a8a"></div>
<div class="a" style="left:161.5px;top:331.5px;width:7px;height:1px;background:#8a8a8a"></div>
<div class="a" style="left:161.5px;top:333.5px;width:7px;height:1px;background:#8a8a8a"></div>
<div class="a" style="left:161.5px;top:335.5px;width:7px;height:1px;background:#8a8a8a"></div>
<div class="a" style="left:1px;top:511px;width:156px;height:19px;border:2px solid #000;background:#fff"></div>
<div class="a" style="left:1px;top:511px;width:4px;height:19px;background:#000"></div>
<span class="t" style="left:21.54px;top:291px;font-size:11px;color:#111;transform:scaleX(1.0909);">Nwell</span>
<span class="t" style="left:87.03px;top:291px;font-size:11px;color:#111;transform:scaleX(1.0644);">drw</span>
<div class="a" style="left:119.2px;top:293.3px;width:12px;height:11.5px;background:linear-gradient(#fbfbfb,#e6e6e6);border:1px solid #d2d2d2;border-bottom:1.5px solid #4c4c4c;border-radius:2px"></div><svg style="left:119.2px;top:293.3px;width:13px;height:11px" viewBox="0 0 13 11"><path d="M2.9 4.1L5.7 3.5L6.7 6.1L10.6 0.5L12.3 1.9L6.6 10.4Z" fill="#d40000"/></svg>
<div class="a" style="left:141.2px;top:293.3px;width:12px;height:11.5px;background:linear-gradient(#fbfbfb,#e6e6e6);border:1px solid #d2d2d2;border-bottom:1.5px solid #4c4c4c;border-radius:2px"></div><svg style="left:141.2px;top:293.3px;width:13px;height:11px" viewBox="0 0 13 11"><path d="M2.9 4.1L5.7 3.5L6.7 6.1L10.6 0.5L12.3 1.9L6.6 10.4Z" fill="#d40000"/></svg>
<span class="t" style="left:22.04px;top:308px;font-size:11px;color:#111;transform:scaleX(1.0379);">Oxide</span>
<span class="t" style="left:87.03px;top:308px;font-size:11px;color:#111;transform:scaleX(1.0644);">drw</span>
<div class="a" style="left:119.2px;top:310.3px;width:12px;height:11.5px;background:linear-gradient(#fbfbfb,#e6e6e6);border:1px solid #d2d2d2;border-bottom:1.5px solid #4c4c4c;border-radius:2px"></div><svg style="left:119.2px;top:310.3px;width:13px;height:11px" viewBox="0 0 13 11"><path d="M2.9 4.1L5.7 3.5L6.7 6.1L10.6 0.5L12.3 1.9L6.6 10.4Z" fill="#d40000"/></svg>
<div class="a" style="left:141.2px;top:310.3px;width:12px;height:11.5px;background:linear-gradient(#fbfbfb,#e6e6e6);border:1px solid #d2d2d2;border-bottom:1.5px solid #4c4c4c;border-radius:2px"></div><svg style="left:141.2px;top:310.3px;width:13px;height:11px" viewBox="0 0 13 11"><path d="M2.9 4.1L5.7 3.5L6.7 6.1L10.6 0.5L12.3 1.9L6.6 10.4Z" fill="#d40000"/></svg>
<span class="t" style="left:22.05px;top:325px;font-size:11px;color:#111;transform:scaleX(1.0270);">Oxide_thk</span>
<span class="t" style="left:87.03px;top:325px;font-size:11px;color:#111;transform:scaleX(1.0644);">drw</span>
<div class="a" style="left:119.2px;top:327.3px;width:12px;height:11.5px;background:linear-gradient(#fbfbfb,#e6e6e6);border:1px solid #d2d2d2;border-bottom:1.5px solid #4c4c4c;border-radius:2px"></div><svg style="left:119.2px;top:327.3px;width:13px;height:11px" viewBox="0 0 13 11"><path d="M2.9 4.1L5.7 3.5L6.7 6.1L10.6 0.5L12.3 1.9L6.6 10.4Z" fill="#d40000"/></svg>
<div class="a" style="left:141.2px;top:327.3px;width:12px;height:11.5px;background:linear-gradient(#fbfbfb,#e6e6e6);border:1px solid #d2d2d2;border-bottom:1.5px solid #4c4c4c;border-radius:2px"></div><svg style="left:141.2px;top:327.3px;width:13px;height:11px" viewBox="0 0 13 11"><path d="M2.9 4.1L5.7 3.5L6.7 6.1L10.6 0.5L12.3 1.9L6.6 10.4Z" fill="#d40000"/></svg>
<span class="t" style="left:21.60px;top:342px;font-size:11px;color:#111;transform:scaleX(1.0209);">Poly</span>
<span class="t" style="left:87.03px;top:342px;font-size:11px;color:#111;transform:scaleX(1.0644);">drw</span>
<div class="a" style="left:119.2px;top:344.3px;width:12px;height:11.5px;background:linear-gradient(#fbfbfb,#e6e6e6);border:1px solid #d2d2d2;border-bottom:1.5px solid #4c4c4c;border-radius:2px"></div><svg style="left:119.2px;top:344.3px;width:13px;height:11px" viewBox="0 0 13 11"><path d="M2.9 4.1L5.7 3.5L6.7 6.1L10.6 0.5L12.3 1.9L6.6 10.4Z" fill="#d40000"/></svg>
<div class="a" style="left:141.2px;top:344.3px;width:12px;height:11.5px;background:linear-gradient(#fbfbfb,#e6e6e6);border:1px solid #d2d2d2;border-bottom:1.5px solid #4c4c4c;border-radius:2px"></div><svg style="left:141.2px;top:344.3px;width:13px;height:11px" viewBox="0 0 13 11"><path d="M2.9 4.1L5.7 3.5L6.7 6.1L10.6 0.5L12.3 1.9L6.6 10.4Z" fill="#d40000"/></svg>
<span class="t" style="left:21.54px;top:359px;font-size:11px;color:#111;transform:scaleX(1.0943);">Pimp</span>
<span class="t" style="left:87.03px;top:359px;font-size:11px;color:#111;transform:scaleX(1.0644);">drw</span>
<div class="a" style="left:119.2px;top:361.3px;width:12px;height:11.5px;background:linear-gradient(#fbfbfb,#e6e6e6);border:1px solid #d2d2d2;border-bottom:1.5px solid #4c4c4c;border-radius:2px"></div><svg style="left:119.2px;top:361.3px;width:13px;height:11px" viewBox="0 0 13 11"><path d="M2.9 4.1L5.7 3.5L6.7 6.1L10.6 0.5L12.3 1.9L6.6 10.4Z" fill="#d40000"/></svg>
<div class="a" style="left:141.2px;top:361.3px;width:12px;height:11.5px;background:linear-gradient(#fbfbfb,#e6e6e6);border:1px solid #d2d2d2;border-bottom:1.5px solid #4c4c4c;border-radius:2px"></div><svg style="left:141.2px;top:361.3px;width:13px;height:11px" viewBox="0 0 13 11"><path d="M2.9 4.1L5.7 3.5L6.7 6.1L10.6 0.5L12.3 1.9L6.6 10.4Z" fill="#d40000"/></svg>
<span class="t" style="left:21.54px;top:376px;font-size:11px;color:#111;transform:scaleX(1.0927);">Nhvt</span>
<span class="t" style="left:87.03px;top:376px;font-size:11px;color:#111;transform:scaleX(1.0644);">drw</span>
<div class="a" style="left:119.2px;top:378.3px;width:12px;height:11.5px;background:linear-gradient(#fbfbfb,#e6e6e6);border:1px solid #d2d2d2;border-bottom:1.5px solid #4c4c4c;border-radius:2px"></div><svg style="left:119.2px;top:378.3px;width:13px;height:11px" viewBox="0 0 13 11"><path d="M2.9 4.1L5.7 3.5L6.7 6.1L10.6 0.5L12.3 1.9L6.6 10.4Z" fill="#d40000"/></svg>
<div class="a" style="left:141.2px;top:378.3px;width:12px;height:11.5px;background:linear-gradient(#fbfbfb,#e6e6e6);border:1px solid #d2d2d2;border-bottom:1.5px solid #4c4c4c;border-radius:2px"></div><svg style="left:141.2px;top:378.3px;width:13px;height:11px" viewBox="0 0 13 11"><path d="M2.9 4.1L5.7 3.5L6.7 6.1L10.6 0.5L12.3 1.9L6.6 10.4Z" fill="#d40000"/></svg>
<span class="t" style="left:21.54px;top:393px;font-size:11px;color:#111;transform:scaleX(1.0865);">Nlvt</span>
<span class="t" style="left:87.03px;top:393px;font-size:11px;color:#111;transform:scaleX(1.0644);">drw</span>
<div class="a" style="left:119.2px;top:395.3px;width:12px;height:11.5px;background:linear-gradient(#fbfbfb,#e6e6e6);border:1px solid #d2d2d2;border-bottom:1.5px solid #4c4c4c;border-radius:2px"></div><svg style="left:119.2px;top:395.3px;width:13px;height:11px" viewBox="0 0 13 11"><path d="M2.9 4.1L5.7 3.5L6.7 6.1L10.6 0.5L12.3 1.9L6.6 10.4Z" fill="#d40000"/></svg>
<div class="a" style="left:141.2px;top:395.3px;width:12px;height:11.5px;background:linear-gradient(#fbfbfb,#e6e6e6);border:1px solid #d2d2d2;border-bottom:1.5px solid #4c4c4c;border-radius:2px"></div><svg style="left:141.2px;top:395.3px;width:13px;height:11px" viewBox="0 0 13 11"><path d="M2.9 4.1L5.7 3.5L6.7 6.1L10.6 0.5L12.3 1.9L6.6 10.4Z" fill="#d40000"/></svg>
<span class="t" style="left:21.52px;top:410px;font-size:11px;color:#111;transform:scaleX(1.1138);">Nimp</span>
<span class="t" style="left:87.03px;top:410px;font-size:11px;color:#111;transform:scaleX(1.0644);">drw</span>
<div class="a" style="left:119.2px;top:412.3px;width:12px;height:11.5px;background:linear-gradient(#fbfbfb,#e6e6e6);border:1px solid #d2d2d2;border-bottom:1.5px solid #4c4c4c;border-radius:2px"></div><svg style="left:119.2px;top:412.3px;width:13px;height:11px" viewBox="0 0 13 11"><path d="M2.9 4.1L5.7 3.5L6.7 6.1L10.6 0.5L12.3 1.9L6.6 10.4Z" fill="#d40000"/></svg>
<div class="a" style="left:141.2px;top:412.3px;width:12px;height:11.5px;background:linear-gradient(#fbfbfb,#e6e6e6);border:1px solid #d2d2d2;border-bottom:1.5px solid #4c4c4c;border-radius:2px"></div><svg style="left:141.2px;top:412.3px;width:13px;height:11px" viewBox="0 0 13 11"><path d="M2.9 4.1L5.7 3.5L6.7 6.1L10.6 0.5L12.3 1.9L6.6 10.4Z" fill="#d40000"/></svg>
<span class="t" style="left:21.57px;top:427px;font-size:11px;color:#111;transform:scaleX(1.0606);">Phvt</span>
<span class="t" style="left:87.03px;top:427px;font-size:11px;color:#111;transform:scaleX(1.0644);">drw</span>
<div class="a" style="left:119.2px;top:429.3px;width:12px;height:11.5px;background:linear-gradient(#fbfbfb,#e6e6e6);border:1px solid #d2d2d2;border-bottom:1.5px solid #4c4c4c;border-radius:2px"></div><svg style="left:119.2px;top:429.3px;width:13px;height:11px" viewBox="0 0 13 11"><path d="M2.9 4.1L5.7 3.5L6.7 6.1L10.6 0.5L12.3 1.9L6.6 10.4Z" fill="#d40000"/></svg>
<div class="a" style="left:141.2px;top:429.3px;width:12px;height:11.5px;background:linear-gradient(#fbfbfb,#e6e6e6);border:1px solid #d2d2d2;border-bottom:1.5px solid #4c4c4c;border-radius:2px"></div><svg style="left:141.2px;top:429.3px;width:13px;height:11px" viewBox="0 0 13 11"><path d="M2.9 4.1L5.7 3.5L6.7 6.1L10.6 0.5L12.3 1.9L6.6 10.4Z" fill="#d40000"/></svg>
<span class="t" style="left:21.58px;top:444px;font-size:11px;color:#111;transform:scaleX(1.0406);">Plvt</span>
<span class="t" style="left:87.03px;top:444px;font-size:11px;color:#111;transform:scaleX(1.0644);">drw</span>
<div class="a" style="left:119.2px;top:446.3px;width:12px;height:11.5px;background:linear-gradient(#fbfbfb,#e6e6e6);border:1px solid #d2d2d2;border-bottom:1.5px solid #4c4c4c;border-radius:2px"></div><svg style="left:119.2px;top:446.3px;width:13px;height:11px" viewBox="0 0 13 11"><path d="M2.9 4.1L5.7 3.5L6.7 6.1L10.6 0.5L12.3 1.9L6.6 10.4Z" fill="#d40000"/></svg>
<div class="a" style="left:141.2px;top:446.3px;width:12px;height:11.5px;background:linear-gradient(#fbfbfb,#e6e6e6);border:1px solid #d2d2d2;border-bottom:1.5px solid #4c4c4c;border-radius:2px"></div><svg style="left:141.2px;top:446.3px;width:13px;height:11px" viewBox="0 0 13 11"><path d="M2.9 4.1L5.7 3.5L6.7 6.1L10.6 0.5L12.3 1.9L6.6 10.4Z" fill="#d40000"/></svg>
<span class="t" style="left:21.57px;top:461px;font-size:11px;color:#111;transform:scaleX(1.0606);">Nzvt</span>
<span class="t" style="left:87.03px;top:461px;font-size:11px;color:#111;transform:scaleX(1.0644);">drw</span>
<div class="a" style="left:119.2px;top:463.3px;width:12px;height:11.5px;background:linear-gradient(#fbfbfb,#e6e6e6);border:1px solid #d2d2d2;border-bottom:1.5px solid #4c4c4c;border-radius:2px"></div><svg style="left:119.2px;top:463.3px;width:13px;height:11px" viewBox="0 0 13 11"><path d="M2.9 4.1L5.7 3.5L6.7 6.1L10.6 0.5L12.3 1.9L6.6 10.4Z" fill="#d40000"/></svg>
<div class="a" style="left:141.2px;top:463.3px;width:12px;height:11.5px;background:linear-gradient(#fbfbfb,#e6e6e6);border:1px solid #d2d2d2;border-bottom:1.5px solid #4c4c4c;border-radius:2px"></div><svg style="left:141.2px;top:463.3px;width:13px;height:11px" viewBox="0 0 13 11"><path d="M2.9 4.1L5.7 3.5L6.7 6.1L10.6 0.5L12.3 1.9L6.6 10.4Z" fill="#d40000"/></svg>
<span class="t" style="left:22.05px;top:478px;font-size:11px;color:#111;transform:scaleX(1.0139);">SiProt</span>
<span class="t" style="left:87.03px;top:478px;font-size:11px;color:#111;transform:scaleX(1.0644);">drw</span>
<div class="a" style="left:119.2px;top:480.3px;width:12px;height:11.5px;background:linear-gradient(#fbfbfb,#e6e6e6);border:1px solid #d2d2d2;border-bottom:1.5px solid #4c4c4c;border-radius:2px"></div><svg style="left:119.2px;top:480.3px;width:13px;height:11px" viewBox="0 0 13 11"><path d="M2.9 4.1L5.7 3.5L6.7 6.1L10.6 0.5L12.3 1.9L6.6 10.4Z" fill="#d40000"/></svg>
<div class="a" style="left:141.2px;top:480.3px;width:12px;height:11.5px;background:linear-gradient(#fbfbfb,#e6e6e6);border:1px solid #d2d2d2;border-bottom:1.5px solid #4c4c4c;border-radius:2px"></div><svg style="left:141.2px;top:480.3px;width:13px;height:11px" viewBox="0 0 13 11"><path d="M2.9 4.1L5.7 3.5L6.7 6.1L10.6 0.5L12.3 1.9L6.6 10.4Z" fill="#d40000"/></svg>
<span class="t" style="left:21.93px;top:495px;font-size:11px;color:#111;transform:scaleX(1.0327);">Cont</span>
<span class="t" style="left:87.03px;top:495px;font-size:11px;color:#111;transform:scaleX(1.0644);">drw</span>
<div class="a" style="left:119.2px;top:497.3px;width:12px;height:11.5px;background:linear-gradient(#fbfbfb,#e6e6e6);border:1px solid #d2d2d2;border-bottom:1.5px solid #4c4c4c;border-radius:2px"></div><svg style="left:119.2px;top:497.3px;width:13px;height:11px" viewBox="0 0 13 11"><path d="M2.9 4.1L5.7 3.5L6.7 6.1L10.6 0.5L12.3 1.9L6.6 10.4Z" fill="#d40000"/></svg>
<div class="a" style="left:141.2px;top:497.3px;width:12px;height:11.5px;background:linear-gradient(#fbfbfb,#e6e6e6);border:1px solid #d2d2d2;border-bottom:1.5px solid #4c4c4c;border-radius:2px"></div><svg style="left:141.2px;top:497.3px;width:13px;height:11px" viewBox="0 0 13 11"><path d="M2.9 4.1L5.7 3.5L6.7 6.1L10.6 0.5L12.3 1.9L6.6 10.4Z" fill="#d40000"/></svg>
<span class="t" style="left:21.57px;top:512px;font-size:11px;color:#111;transform:scaleX(1.0574);">Metal1</span>
<span class="t" style="left:87.03px;top:512px;font-size:11px;color:#111;transform:scaleX(1.0644);">drw</span>
<div class="a" style="left:119.2px;top:514.3px;width:12px;height:11.5px;background:linear-gradient(#fbfbfb,#e6e6e6);border:1px solid #d2d2d2;border-bottom:1.5px solid #4c4c4c;border-radius:2px"></div><svg style="left:119.2px;top:514.3px;width:13px;height:11px" viewBox="0 0 13 11"><path d="M2.9 4.1L5.7 3.5L6.7 6.1L10.6 0.5L12.3 1.9L6.6 10.4Z" fill="#d40000"/></svg>
<div class="a" style="left:141.2px;top:514.3px;width:12px;height:11.5px;background:linear-gradient(#fbfbfb,#e6e6e6);border:1px solid #d2d2d2;border-bottom:1.5px solid #4c4c4c;border-radius:2px"></div><svg style="left:141.2px;top:514.3px;width:13px;height:11px" viewBox="0 0 13 11"><path d="M2.9 4.1L5.7 3.5L6.7 6.1L10.6 0.5L12.3 1.9L6.6 10.4Z" fill="#d40000"/></svg>
<span class="t" style="left:22.50px;top:529px;font-size:11px;color:#111;transform:scaleX(0.9278);">Via1</span>
<span class="t" style="left:87.03px;top:529px;font-size:11px;color:#111;transform:scaleX(1.0644);">drw</span>
<div class="a" style="left:119.2px;top:531.3px;width:12px;height:11.5px;background:linear-gradient(#fbfbfb,#e6e6e6);border:1px solid #d2d2d2;border-bottom:1.5px solid #4c4c4c;border-radius:2px"></div><svg style="left:119.2px;top:531.3px;width:13px;height:11px" viewBox="0 0 13 11"><path d="M2.9 4.1L5.7 3.5L6.7 6.1L10.6 0.5L12.3 1.9L6.6 10.4Z" fill="#d40000"/></svg>
<div class="a" style="left:141.2px;top:531.3px;width:12px;height:11.5px;background:linear-gradient(#fbfbfb,#e6e6e6);border:1px solid #d2d2d2;border-bottom:1.5px solid #4c4c4c;border-radius:2px"></div><svg style="left:141.2px;top:531.3px;width:13px;height:11px" viewBox="0 0 13 11"><path d="M2.9 4.1L5.7 3.5L6.7 6.1L10.6 0.5L12.3 1.9L6.6 10.4Z" fill="#d40000"/></svg>
<span class="t" style="left:21.54px;top:546px;font-size:11px;color:#111;transform:scaleX(1.0859);">Metal2</span>
<span class="t" style="left:87.03px;top:546px;font-size:11px;color:#111;transform:scaleX(1.0644);">drw</span>
<div class="a" style="left:119.2px;top:548.3px;width:12px;height:11.5px;background:linear-gradient(#fbfbfb,#e6e6e6);border:1px solid #d2d2d2;border-bottom:1.5px solid #4c4c4c;border-radius:2px"></div><svg style="left:119.2px;top:548.3px;width:13px;height:11px" viewBox="0 0 13 11"><path d="M2.9 4.1L5.7 3.5L6.7 6.1L10.6 0.5L12.3 1.9L6.6 10.4Z" fill="#d40000"/></svg>
<div class="a" style="left:141.2px;top:548.3px;width:12px;height:11.5px;background:linear-gradient(#fbfbfb,#e6e6e6);border:1px solid #d2d2d2;border-bottom:1.5px solid #4c4c4c;border-radius:2px"></div><svg style="left:141.2px;top:548.3px;width:13px;height:11px" viewBox="0 0 13 11"><path d="M2.9 4.1L5.7 3.5L6.7 6.1L10.6 0.5L12.3 1.9L6.6 10.4Z" fill="#d40000"/></svg>
<span class="t" style="left:22.50px;top:563px;font-size:11px;color:#111;transform:scaleX(0.9841);">Via2</span>
<span class="t" style="left:87.03px;top:563px;font-size:11px;color:#111;transform:scaleX(1.0644);">drw</span>
<div class="a" style="left:119.2px;top:565.3px;width:12px;height:11.5px;background:linear-gradient(#fbfbfb,#e6e6e6);border:1px solid #d2d2d2;border-bottom:1.5px solid #4c4c4c;border-radius:2px"></div><svg style="left:119.2px;top:565.3px;width:13px;height:11px" viewBox="0 0 13 11"><path d="M2.9 4.1L5.7 3.5L6.7 6.1L10.6 0.5L12.3 1.9L6.6 10.4Z" fill="#d40000"/></svg>
<div class="a" style="left:141.2px;top:565.3px;width:12px;height:11.5px;background:linear-gradient(#fbfbfb,#e6e6e6);border:1px solid #d2d2d2;border-bottom:1.5px solid #4c4c4c;border-radius:2px"></div><svg style="left:141.2px;top:565.3px;width:13px;height:11px" viewBox="0 0 13 11"><path d="M2.9 4.1L5.7 3.5L6.7 6.1L10.6 0.5L12.3 1.9L6.6 10.4Z" fill="#d40000"/></svg>
<span class="t" style="left:21.55px;top:580px;font-size:11px;color:#111;transform:scaleX(1.0821);">Metal3</span>
<span class="t" style="left:87.03px;top:580px;font-size:11px;color:#111;transform:scaleX(1.0644);">drw</span>
<div class="a" style="left:119.2px;top:582.3px;width:12px;height:11.5px;background:linear-gradient(#fbfbfb,#e6e6e6);border:1px solid #d2d2d2;border-bottom:1.5px solid #4c4c4c;border-radius:2px"></div><svg style="left:119.2px;top:582.3px;width:13px;height:11px" viewBox="0 0 13 11"><path d="M2.9 4.1L5.7 3.5L6.7 6.1L10.6 0.5L12.3 1.9L6.6 10.4Z" fill="#d40000"/></svg>
<div class="a" style="left:141.2px;top:582.3px;width:12px;height:11.5px;background:linear-gradient(#fbfbfb,#e6e6e6);border:1px solid #d2d2d2;border-bottom:1.5px solid #4c4c4c;border-radius:2px"></div><svg style="left:141.2px;top:582.3px;width:13px;height:11px" viewBox="0 0 13 11"><path d="M2.9 4.1L5.7 3.5L6.7 6.1L10.6 0.5L12.3 1.9L6.6 10.4Z" fill="#d40000"/></svg>
<span class="t" style="left:22.50px;top:597px;font-size:11px;color:#111;transform:scaleX(0.9790);">Via3</span>
<span class="t" style="left:87.03px;top:597px;font-size:11px;color:#111;transform:scaleX(1.0644);">drw</span>
<div class="a" style="left:119.2px;top:599.3px;width:12px;height:11.5px;background:linear-gradient(#fbfbfb,#e6e6e6);border:1px solid #d2d2d2;border-bottom:1.5px solid #4c4c4c;border-radius:2px"></div><svg style="left:119.2px;top:599.3px;width:13px;height:11px" viewBox="0 0 13 11"><path d="M2.9 4.1L5.7 3.5L6.7 6.1L10.6 0.5L12.3 1.9L6.6 10.4Z" fill="#d40000"/></svg>
<div class="a" style="left:141.2px;top:599.3px;width:12px;height:11.5px;background:linear-gradient(#fbfbfb,#e6e6e6);border:1px solid #d2d2d2;border-bottom:1.5px solid #4c4c4c;border-radius:2px"></div><svg style="left:141.2px;top:599.3px;width:13px;height:11px" viewBox="0 0 13 11"><path d="M2.9 4.1L5.7 3.5L6.7 6.1L10.6 0.5L12.3 1.9L6.6 10.4Z" fill="#d40000"/></svg>
<span class="t" style="left:21.55px;top:614px;font-size:11px;color:#111;transform:scaleX(1.0846);">Metal4</span>
<span class="t" style="left:87.03px;top:614px;font-size:11px;color:#111;transform:scaleX(1.0644);">drw</span>
<div class="a" style="left:119.2px;top:616.3px;width:12px;height:11.5px;background:linear-gradient(#fbfbfb,#e6e6e6);border:1px solid #d2d2d2;border-bottom:1.5px solid #4c4c4c;border-radius:2px"></div><svg style="left:119.2px;top:616.3px;width:13px;height:11px" viewBox="0 0 13 11"><path d="M2.9 4.1L5.7 3.5L6.7 6.1L10.6 0.5L12.3 1.9L6.6 10.4Z" fill="#d40000"/></svg>
<div class="a" style="left:141.2px;top:616.3px;width:12px;height:11.5px;background:linear-gradient(#fbfbfb,#e6e6e6);border:1px solid #d2d2d2;border-bottom:1.5px solid #4c4c4c;border-radius:2px"></div><svg style="left:141.2px;top:616.3px;width:13px;height:11px" viewBox="0 0 13 11"><path d="M2.9 4.1L5.7 3.5L6.7 6.1L10.6 0.5L12.3 1.9L6.6 10.4Z" fill="#d40000"/></svg>
<span class="t" style="left:22.50px;top:631px;font-size:11px;color:#111;transform:scaleX(0.9833);">Via4</span>
<span class="t" style="left:87.03px;top:631px;font-size:11px;color:#111;transform:scaleX(1.0644);">drw</span>
<div class="a" style="left:119.2px;top:633.3px;width:12px;height:11.5px;background:linear-gradient(#fbfbfb,#e6e6e6);border:1px solid #d2d2d2;border-bottom:1.5px solid #4c4c4c;border-radius:2px"></div><svg style="left:119.2px;top:633.3px;width:13px;height:11px" viewBox="0 0 13 11"><path d="M2.9 4.1L5.7 3.5L6.7 6.1L10.6 0.5L12.3 1.9L6.6 10.4Z" fill="#d40000"/></svg>
<div class="a" style="left:141.2px;top:633.3px;width:12px;height:11.5px;background:linear-gradient(#fbfbfb,#e6e6e6);border:1px solid #d2d2d2;border-bottom:1.5px solid #4c4c4c;border-radius:2px"></div><svg style="left:141.2px;top:633.3px;width:13px;height:11px" viewBox="0 0 13 11"><path d="M2.9 4.1L5.7 3.5L6.7 6.1L10.6 0.5L12.3 1.9L6.6 10.4Z" fill="#d40000"/></svg>
<span class="t" style="left:21.55px;top:648px;font-size:11px;color:#111;transform:scaleX(1.0821);">Metal5</span>
<span class="t" style="left:87.03px;top:648px;font-size:11px;color:#111;transform:scaleX(1.0644);">drw</span>
<div class="a" style="left:119.2px;top:650.3px;width:12px;height:11.5px;background:linear-gradient(#fbfbfb,#e6e6e6);border:1px solid #d2d2d2;border-bottom:1.5px solid #4c4c4c;border-radius:2px"></div><svg style="left:119.2px;top:650.3px;width:13px;height:11px" viewBox="0 0 13 11"><path d="M2.9 4.1L5.7 3.5L6.7 6.1L10.6 0.5L12.3 1.9L6.6 10.4Z" fill="#d40000"/></svg>
<div class="a" style="left:141.2px;top:650.3px;width:12px;height:11.5px;background:linear-gradient(#fbfbfb,#e6e6e6);border:1px solid #d2d2d2;border-bottom:1.5px solid #4c4c4c;border-radius:2px"></div><svg style="left:141.2px;top:650.3px;width:13px;height:11px" viewBox="0 0 13 11"><path d="M2.9 4.1L5.7 3.5L6.7 6.1L10.6 0.5L12.3 1.9L6.6 10.4Z" fill="#d40000"/></svg>
<span class="t" style="left:22.50px;top:665px;font-size:11px;color:#111;transform:scaleX(0.9790);">Via5</span>
<span class="t" style="left:87.03px;top:665px;font-size:11px;color:#111;transform:scaleX(1.0644);">drw</span>
<div class="a" style="left:119.2px;top:667.3px;width:12px;height:11.5px;background:linear-gradient(#fbfbfb,#e6e6e6);border:1px solid #d2d2d2;border-bottom:1.5px solid #4c4c4c;border-radius:2px"></div><svg style="left:119.2px;top:667.3px;width:13px;height:11px" viewBox="0 0 13 11"><path d="M2.9 4.1L5.7 3.5L6.7 6.1L10.6 0.5L12.3 1.9L6.6 10.4Z" fill="#d40000"/></svg>
<div class="a" style="left:141.2px;top:667.3px;width:12px;height:11.5px;background:linear-gradient(#fbfbfb,#e6e6e6);border:1px solid #d2d2d2;border-bottom:1.5px solid #4c4c4c;border-radius:2px"></div><svg style="left:141.2px;top:667.3px;width:13px;height:11px" viewBox="0 0 13 11"><path d="M2.9 4.1L5.7 3.5L6.7 6.1L10.6 0.5L12.3 1.9L6.6 10.4Z" fill="#d40000"/></svg>
<span class="t" style="left:21.55px;top:682px;font-size:11px;color:#111;transform:scaleX(1.0821);">Metal6</span>
<span class="t" style="left:87.03px;top:682px;font-size:11px;color:#111;transform:scaleX(1.0644);">drw</span>
<div class="a" style="left:119.2px;top:684.3px;width:12px;height:11.5px;background:linear-gradient(#fbfbfb,#e6e6e6);border:1px solid #d2d2d2;border-bottom:1.5px solid #4c4c4c;border-radius:2px"></div><svg style="left:119.2px;top:684.3px;width:13px;height:11px" viewBox="0 0 13 11"><path d="M2.9 4.1L5.7 3.5L6.7 6.1L10.6 0.5L12.3 1.9L6.6 10.4Z" fill="#d40000"/></svg>
<div class="a" style="left:141.2px;top:684.3px;width:12px;height:11.5px;background:linear-gradient(#fbfbfb,#e6e6e6);border:1px solid #d2d2d2;border-bottom:1.5px solid #4c4c4c;border-radius:2px"></div><svg style="left:141.2px;top:684.3px;width:13px;height:11px" viewBox="0 0 13 11"><path d="M2.9 4.1L5.7 3.5L6.7 6.1L10.6 0.5L12.3 1.9L6.6 10.4Z" fill="#d40000"/></svg>
<span class="t" style="left:22.50px;top:699px;font-size:11px;color:#111;transform:scaleX(0.9790);">Via6</span>
<span class="t" style="left:87.03px;top:699px;font-size:11px;color:#111;transform:scaleX(1.0644);">drw</span>
<div class="a" style="left:119.2px;top:701.3px;width:12px;height:11.5px;background:linear-gradient(#fbfbfb,#e6e6e6);border:1px solid #d2d2d2;border-bottom:1.5px solid #4c4c4c;border-radius:2px"></div><svg style="left:119.2px;top:701.3px;width:13px;height:11px" viewBox="0 0 13 11"><path d="M2.9 4.1L5.7 3.5L6.7 6.1L10.6 0.5L12.3 1.9L6.6 10.4Z" fill="#d40000"/></svg>
<div class="a" style="left:141.2px;top:701.3px;width:12px;height:11.5px;background:linear-gradient(#fbfbfb,#e6e6e6);border:1px solid #d2d2d2;border-bottom:1.5px solid #4c4c4c;border-radius:2px"></div><svg style="left:141.2px;top:701.3px;width:13px;height:11px" viewBox="0 0 13 11"><path d="M2.9 4.1L5.7 3.5L6.7 6.1L10.6 0.5L12.3 1.9L6.6 10.4Z" fill="#d40000"/></svg>
<span class="t" style="left:21.54px;top:716px;font-size:11px;color:#111;transform:scaleX(1.0859);">Metal7</span>
<span class="t" style="left:87.03px;top:716px;font-size:11px;color:#111;transform:scaleX(1.0644);">drw</span>
<div class="a" style="left:119.2px;top:718.3px;width:12px;height:11.5px;background:linear-gradient(#fbfbfb,#e6e6e6);border:1px solid #d2d2d2;border-bottom:1.5px solid #4c4c4c;border-radius:2px"></div><svg style="left:119.2px;top:718.3px;width:13px;height:11px" viewBox="0 0 13 11"><path d="M2.9 4.1L5.7 3.5L6.7 6.1L10.6 0.5L12.3 1.9L6.6 10.4Z" fill="#d40000"/></svg>
<div class="a" style="left:141.2px;top:718.3px;width:12px;height:11.5px;background:linear-gradient(#fbfbfb,#e6e6e6);border:1px solid #d2d2d2;border-bottom:1.5px solid #4c4c4c;border-radius:2px"></div><svg style="left:141.2px;top:718.3px;width:13px;height:11px" viewBox="0 0 13 11"><path d="M2.9 4.1L5.7 3.5L6.7 6.1L10.6 0.5L12.3 1.9L6.6 10.4Z" fill="#d40000"/></svg>
<span class="t" style="left:22.50px;top:733px;font-size:11px;color:#111;transform:scaleX(0.9841);">Via7</span>
<span class="t" style="left:87.03px;top:733px;font-size:11px;color:#111;transform:scaleX(1.0644);">drw</span>
<div class="a" style="left:119.2px;top:735.3px;width:12px;height:11.5px;background:linear-gradient(#fbfbfb,#e6e6e6);border:1px solid #d2d2d2;border-bottom:1.5px solid #4c4c4c;border-radius:2px"></div><svg style="left:119.2px;top:735.3px;width:13px;height:11px" viewBox="0 0 13 11"><path d="M2.9 4.1L5.7 3.5L6.7 6.1L10.6 0.5L12.3 1.9L6.6 10.4Z" fill="#d40000"/></svg>
<div class="a" style="left:141.2px;top:735.3px;width:12px;height:11.5px;background:linear-gradient(#fbfbfb,#e6e6e6);border:1px solid #d2d2d2;border-bottom:1.5px solid #4c4c4c;border-radius:2px"></div><svg style="left:141.2px;top:735.3px;width:13px;height:11px" viewBox="0 0 13 11"><path d="M2.9 4.1L5.7 3.5L6.7 6.1L10.6 0.5L12.3 1.9L6.6 10.4Z" fill="#d40000"/></svg>
<span class="t" style="left:21.55px;top:750px;font-size:11px;color:#111;transform:scaleX(1.0821);">Metal8</span>
<span class="t" style="left:87.03px;top:750px;font-size:11px;color:#111;transform:scaleX(1.0644);">drw</span>
<div class="a" style="left:119.2px;top:752.3px;width:12px;height:11.5px;background:linear-gradient(#fbfbfb,#e6e6e6);border:1px solid #d2d2d2;border-bottom:1.5px solid #4c4c4c;border-radius:2px"></div><svg style="left:119.2px;top:752.3px;width:13px;height:11px" viewBox="0 0 13 11"><path d="M2.9 4.1L5.7 3.5L6.7 6.1L10.6 0.5L12.3 1.9L6.6 10.4Z" fill="#d40000"/></svg>
<div class="a" style="left:141.2px;top:752.3px;width:12px;height:11.5px;background:linear-gradient(#fbfbfb,#e6e6e6);border:1px solid #d2d2d2;border-bottom:1.5px solid #4c4c4c;border-radius:2px"></div><svg style="left:141.2px;top:752.3px;width:13px;height:11px" viewBox="0 0 13 11"><path d="M2.9 4.1L5.7 3.5L6.7 6.1L10.6 0.5L12.3 1.9L6.6 10.4Z" fill="#d40000"/></svg>
<span class="t" style="left:22.50px;top:767px;font-size:11px;color:#111;transform:scaleX(0.9790);">Via8</span>
<span class="t" style="left:87.03px;top:767px;font-size:11px;color:#111;transform:scaleX(1.0644);">drw</span>
<div class="a" style="left:119.2px;top:769.3px;width:12px;height:11.5px;background:linear-gradient(#fbfbfb,#e6e6e6);border:1px solid #d2d2d2;border-bottom:1.5px solid #4c4c4c;border-radius:2px"></div><svg style="left:119.2px;top:769.3px;width:13px;height:11px" viewBox="0 0 13 11"><path d="M2.9 4.1L5.7 3.5L6.7 6.1L10.6 0.5L12.3 1.9L6.6 10.4Z" fill="#d40000"/></svg>
<div class="a" style="left:141.2px;top:769.3px;width:12px;height:11.5px;background:linear-gradient(#fbfbfb,#e6e6e6);border:1px solid #d2d2d2;border-bottom:1.5px solid #4c4c4c;border-radius:2px"></div><svg style="left:141.2px;top:769.3px;width:13px;height:11px" viewBox="0 0 13 11"><path d="M2.9 4.1L5.7 3.5L6.7 6.1L10.6 0.5L12.3 1.9L6.6 10.4Z" fill="#d40000"/></svg>
<span class="t" style="left:21.54px;top:784px;font-size:11px;color:#111;transform:scaleX(1.0859);">Metal9</span>
<span class="t" style="left:87.03px;top:784px;font-size:11px;color:#111;transform:scaleX(1.0644);">drw</span>
<div class="a" style="left:119.2px;top:786.3px;width:12px;height:11.5px;background:linear-gradient(#fbfbfb,#e6e6e6);border:1px solid #d2d2d2;border-bottom:1.5px solid #4c4c4c;border-radius:2px"></div><svg style="left:119.2px;top:786.3px;width:13px;height:11px" viewBox="0 0 13 11"><path d="M2.9 4.1L5.7 3.5L6.7 6.1L10.6 0.5L12.3 1.9L6.6 10.4Z" fill="#d40000"/></svg>
<div class="a" style="left:141.2px;top:786.3px;width:12px;height:11.5px;background:linear-gradient(#fbfbfb,#e6e6e6);border:1px solid #d2d2d2;border-bottom:1.5px solid #4c4c4c;border-radius:2px"></div><svg style="left:141.2px;top:786.3px;width:13px;height:11px" viewBox="0 0 13 11"><path d="M2.9 4.1L5.7 3.5L6.7 6.1L10.6 0.5L12.3 1.9L6.6 10.4Z" fill="#d40000"/></svg>
<span class="t" style="left:22.50px;top:801px;font-size:11px;color:#111;transform:scaleX(0.9841);">Via9</span>
<span class="t" style="left:87.03px;top:801px;font-size:11px;color:#111;transform:scaleX(1.0644);">drw</span>
<div class="a" style="left:119.2px;top:803.3px;width:12px;height:11.5px;background:linear-gradient(#fbfbfb,#e6e6e6);border:1px solid #d2d2d2;border-bottom:1.5px solid #4c4c4c;border-radius:2px"></div><svg style="left:119.2px;top:803.3px;width:13px;height:11px" viewBox="0 0 13 11"><path d="M2.9 4.1L5.7 3.5L6.7 6.1L10.6 0.5L12.3 1.9L6.6 10.4Z" fill="#d40000"/></svg>
<div class="a" style="left:141.2px;top:803.3px;width:12px;height:11.5px;background:linear-gradient(#fbfbfb,#e6e6e6);border:1px solid #d2d2d2;border-bottom:1.5px solid #4c4c4c;border-radius:2px"></div><svg style="left:141.2px;top:803.3px;width:13px;height:11px" viewBox="0 0 13 11"><path d="M2.9 4.1L5.7 3.5L6.7 6.1L10.6 0.5L12.3 1.9L6.6 10.4Z" fill="#d40000"/></svg>
<div class="a" style="left:119.5px;top:820.6px;width:12px;height:1.4px;background:#f0f0f0;border-top:1px solid #d8d8d8"></div>
<div class="a" style="left:141.5px;top:820.6px;width:12px;height:1.4px;background:#f0f0f0;border-top:1px solid #d8d8d8"></div>
<svg style="left:0;top:272px;width:24px;height:550px" viewBox="0 272 24 550" shape-rendering="crispEdges">
<defs><pattern id="pPoly" x="2" y="2" width="4" height="4" patternUnits="userSpaceOnUse"><g fill="#0f0"><rect x="0" y="0" width="1" height="1"/><rect x="1" y="1" width="1" height="1"/><rect x="2" y="2" width="1" height="1"/><rect x="3" y="3" width="1" height="1"/><rect x="1" y="3" width="1" height="1"/><rect x="3" y="1" width="1" height="1"/></g></pattern><pattern id="pM2" x="2" y="0" width="4" height="4" patternUnits="userSpaceOnUse"><rect x="1" y="2" width="1" height="1" fill="#f00"/><rect x="3" y="0" width="1" height="1" fill="#f00"/></pattern><pattern id="stB" x="3" y="3" width="4" height="4" patternUnits="userSpaceOnUse"><rect x="1" y="2" width="1" height="1" fill="#00f"/><rect x="3" y="0" width="1" height="1" fill="#00f"/></pattern><pattern id="stA" x="3" y="2" width="4" height="4" patternUnits="userSpaceOnUse"><rect x="1" y="2" width="1" height="1" fill="#00f"/><rect x="3" y="0" width="1" height="1" fill="#00f"/></pattern></defs>
<rect x="3" y="292" width="15" height="15" fill="#000"/><rect x="4.5" y="293.5" width="12" height="12" fill="#000" stroke="#90f"/>
<rect x="3" y="309" width="15" height="15" fill="#000"/>
<g fill="#f21c0c"><rect x="4" y="310" width="5" height="1"/><rect x="10" y="310" width="4" height="1"/><rect x="4" y="310" width="1" height="6"/><rect x="4" y="317" width="1" height="5"/><rect x="4" y="322" width="5" height="1"/><rect x="8" y="310" width="1" height="2"/><rect x="8" y="320" width="1" height="2"/><rect x="11" y="322" width="4" height="1"/><rect x="16" y="310" width="1" height="4"/><rect x="16" y="316" width="1" height="4"/><rect x="16" y="321" width="1" height="1"/><rect x="8" y="315" width="1" height="1"/><rect x="8" y="317" width="1" height="1"/><rect x="12" y="313" width="1" height="1"/><rect x="12" y="317" width="1" height="1"/><rect x="12" y="319" width="1" height="1"/><rect x="12" y="311" width="1" height="1"/></g>
<rect x="3" y="326" width="15" height="15" fill="#000"/><rect x="4" y="327" width="13" height="13" fill="#ee1e0e"/><path d="M8 330h2v1h1v-1h3v6h-7v-2h1v-1h-1v-2h1z" fill="#000"/><rect x="11" y="334" width="1" height="1" fill="#ee1e0e"/>
<rect x="3" y="343" width="15" height="15" fill="#000"/><rect x="4" y="344" width="13" height="13" fill="#0f0"/><rect x="5" y="345" width="11" height="11" fill="#000"/><rect x="5" y="345" width="11" height="11" fill="url(#pPoly)"/>
<rect x="3" y="360" width="15" height="15" fill="#000"/><rect x="4.5" y="361.5" width="12" height="12" fill="#000" stroke="#e2502a"/><path d="M5 362L16 373" stroke="#e2502a" stroke-width="1" shape-rendering="auto"/>
<rect x="3" y="377" width="15" height="15" fill="#000"/><rect x="4.5" y="378.5" width="12" height="12" fill="#000" stroke="#8e2e2e"/><path d="M5 382.5h2.5v-2h4v2h4.5 M5 388.5h2.5v-1h4v1h4.5 M7.5 390v-1.5 M11.5 390v-1.5" fill="none" stroke="#8e2e2e"/>
<rect x="3" y="394" width="15" height="15" fill="#000"/><rect x="4" y="395" width="13" height="13" fill="#842a2a"/><rect x="7" y="398" width="7" height="7" fill="#000"/>
<rect x="3" y="411" width="15" height="15" fill="#000"/><rect x="4.5" y="412.5" width="12" height="12" fill="#000" stroke="#ff0"/><g fill="#ff0"><rect x="8" y="422" width="1" height="1"/><rect x="10" y="420" width="1" height="1"/><rect x="12" y="418" width="1" height="1"/><rect x="14" y="416" width="1" height="1"/></g>
<rect x="3" y="428" width="15" height="15" fill="#000"/><rect x="4" y="429" width="13" height="13" fill="#f00"/><path d="M5 430h3v1h-2v6h2v3h-2v1h-1z M10 430h6v1h-2v1h-1v5h1v1h2v2h-1v1h-4v-1h-1z" fill="#000"/><rect x="14" y="433" width="1" height="3" fill="#000"/><rect x="7" y="432" width="2" height="4" fill="#000"/>
<rect x="3" y="445" width="15" height="15" fill="#000"/><rect x="4" y="446" width="13" height="13" fill="#f00"/><rect x="7" y="449" width="7" height="7" fill="#000"/>
<rect x="3" y="462" width="15" height="15" fill="#000"/><rect x="4.5" y="463.5" width="12" height="12" fill="#000" stroke="#f00"/>
<rect x="3" y="479" width="15" height="15" fill="#000"/><g fill="#00f"><rect x="4" y="480" width="1" height="1"/><rect x="7" y="480" width="5" height="1"/><rect x="15" y="480" width="1" height="1"/><rect x="4" y="484" width="1" height="5"/><rect x="16" y="483" width="1" height="5"/><rect x="4" y="492" width="1" height="1"/><rect x="8" y="492" width="5" height="1"/></g><path d="M4 480L17 493" stroke="#00f" stroke-width="1.2" shape-rendering="auto"/>
<rect x="3" y="496" width="15" height="15" fill="#000"/><rect x="4" y="497" width="13" height="13" fill="#fff"/>
<rect x="3" y="513" width="15" height="15" fill="#000"/><rect x="4.5" y="514.5" width="12" height="12" fill="url(#stB)" stroke="#00f"/>
<rect x="3" y="530" width="15" height="15" fill="#000"/><rect x="4" y="531" width="13" height="13" fill="#37b9ff"/>
<rect x="3" y="547" width="15" height="15" fill="#000"/><rect x="4.5" y="548.5" width="12" height="12" fill="url(#pM2)" stroke="#f00"/>
<rect x="3" y="564" width="15" height="15" fill="#000"/><rect x="4" y="565" width="13" height="13" fill="#ff8000"/>
<rect x="3" y="581" width="15" height="15" fill="#000"/><rect x="4.5" y="582.5" width="12" height="12" fill="#000" stroke="#00d068"/><path d="M5 583L16 594" stroke="#00d068" stroke-width="1" shape-rendering="auto"/>
<rect x="3" y="598" width="15" height="15" fill="#000"/><rect x="4" y="599" width="13" height="13" fill="#9a00f0"/>
<rect x="3" y="615" width="15" height="15" fill="#000"/><rect x="4" y="616" width="13" height="13" fill="#ffb8f8"/><rect x="6" y="617" width="7" height="11" fill="#000"/><rect x="14" y="617" width="2" height="11" fill="#000"/><rect x="5" y="620" width="1" height="3" fill="#000"/><rect x="13" y="620" width="1" height="3" fill="#ffb8f8"/>
<rect x="3" y="632" width="15" height="15" fill="#000"/><rect x="4" y="633" width="13" height="13" fill="#802626"/>
<rect x="3" y="649" width="15" height="15" fill="#000"/><rect x="4.5" y="650.5" width="12" height="12" fill="#000" stroke="#f8f0a8"/><rect x="13" y="656" width="1" height="5" fill="#f8f0a8"/><rect x="5" y="651" width="1" height="2" fill="#f8f0a8"/>
<rect x="3" y="666" width="15" height="15" fill="#000"/><rect x="4" y="667" width="13" height="13" fill="#0ff"/>
<rect x="3" y="683" width="15" height="15" fill="#000"/><rect x="4.5" y="684.5" width="12" height="12" fill="#000" stroke="#ccd6f8"/><path d="M14.5 685L9.5 696" stroke="#dfe6ff" stroke-width="1.2" stroke-dasharray="2.2 0.8" shape-rendering="auto"/><rect x="5" y="686" width="1" height="2" fill="#ccd6f8"/>
<rect x="3" y="700" width="15" height="15" fill="#000"/><rect x="4" y="701" width="13" height="13" fill="#dbe6ff"/>
<rect x="3" y="717" width="15" height="15" fill="#000"/><rect x="4.5" y="718.5" width="12" height="12" fill="#000" stroke="#1486ff"/><path d="M7.5 727v-4h5v4M10 723.5v3.5" fill="none" stroke="#1486ff" stroke-width="1"/><path d="M12 730L16 726" stroke="#1486ff" stroke-width="1.1" shape-rendering="auto"/><rect x="5" y="719" width="1" height="1" fill="#1486ff"/>
<rect x="3" y="734" width="15" height="15" fill="#000"/><rect x="4" y="735" width="13" height="13" fill="#ded000"/>
<rect x="3" y="751" width="15" height="15" fill="#000"/><rect x="4.5" y="752.5" width="12" height="12" fill="#000" stroke="#fb52a6"/><path d="M10.5 763v-4h5v4M13 759.5v3.5" fill="none" stroke="#fb52a6" stroke-width="1"/><path d="M5 753L9 757" stroke="#fb52a6" stroke-width="1.1" shape-rendering="auto"/>
<rect x="3" y="768" width="15" height="15" fill="#000"/><rect x="4" y="769" width="13" height="13" fill="#f0f"/>
<rect x="3" y="785" width="15" height="15" fill="#000"/><rect x="4.5" y="786.5" width="12" height="12" fill="#0c0000" stroke="#7c2222"/><path d="M10.5 797v-4h5v4M13 793.5v3.5" fill="none" stroke="#a83030" stroke-width="1"/>
<rect x="3" y="802" width="15" height="15" fill="#000"/><rect x="4" y="803" width="13" height="13" fill="#c8442c"/>
<rect x="3" y="819" width="15" height="3" fill="#000"/><rect x="4" y="820" width="13" height="2" fill="#00f"/>
</svg>
<div class="a" style="left:0px;top:822px;width:175px;height:1.5px;background:#f4f4f4"></div>
<div class="a" style="left:0px;top:823.5px;width:175px;height:5.5px;background:linear-gradient(#d8dae0,#d0d2d8)"></div>
<div class="a" style="left:0px;top:829px;width:175px;height:20px;background:linear-gradient(#f6f6f6,#dcdcdc 45%,#b4b4b4);border:1px solid #555;border-right-color:#777;"></div><span class="t" style="left:13.05px;top:831px;font-size:11px;font-weight:bold;-webkit-text-stroke:0;color:#000;transform:scaleX(1.0256);">Objects</span><div class="a" style="left:145.5px;top:831.5px;width:13px;height:13px;background:linear-gradient(#f4f4f4,#d4d4d4);border:1px solid #bcbcbc;border-radius:4px;box-shadow:0 0 0 0.5px rgba(255,255,255,.6)"></div><svg style="left:148px;top:833px;width:9px;height:10px" viewBox="0 0 9 10" shape-rendering="crispEdges"><g fill="none" stroke="#000"><rect x="3" y="1" width="5" height="4.5"/><path d="M2.5 0.5h6"/><rect x="0.5" y="4.5" width="5" height="4.5" fill="#e6e6e6"/><path d="M0 4h6"/></g></svg><div class="a" style="left:160.5px;top:831.5px;width:13px;height:13px;background:linear-gradient(#f4f4f4,#d4d4d4);border:1px solid #bcbcbc;border-radius:4px;box-shadow:0 0 0 0.5px rgba(255,255,255,.6)"></div><svg style="left:162.6px;top:834px;width:9px;height:8px" viewBox="0 0 9 8"><path d="M0.6 0.4L8.4 7.6M8.4 0.4L0.6 7.6" stroke="#000" stroke-width="1.4" fill="none"/></svg>
<div class="a" style="left:1px;top:848px;width:173px;height:72px;background:#fff"></div>
<div class="a" style="left:1px;top:848px;width:173px;height:2px;background:#1a1a1a"></div>
<div class="a" style="left:1px;top:848px;width:1.5px;height:72px;background:#2a2a2a"></div>
<div class="a" style="left:1px;top:919.6px;width:173px;height:1.8px;background:#1a1a1a"></div>
<div class="a" style="left:2.5px;top:850px;width:154px;height:17.5px;background:linear-gradient(#d4d4d4,#bcbcbc 50%,#a6a6a6);"></div>
<div class="a" style="left:111px;top:851px;width:1px;height:16px;background:#6e6e6e"></div><div class="a" style="left:112px;top:851px;width:1px;height:16px;background:#d0d0d0"></div>
<div class="a" style="left:133px;top:851px;width:1px;height:16px;background:#6e6e6e"></div><div class="a" style="left:134px;top:851px;width:1px;height:16px;background:#d0d0d0"></div>
<div class="a" style="left:156px;top:851px;width:1px;height:16px;background:#6e6e6e"></div><div class="a" style="left:157px;top:851px;width:1px;height:16px;background:#d0d0d0"></div>
<span class="t" style="left:36.25px;top:851px;font-size:11px;font-weight:bold;-webkit-text-stroke:0;color:#000;transform:scaleX(1.0205);">Objects</span>
<span class="t" style="left:119.50px;top:851px;font-size:11px;color:#000;transform:scaleX(1.0176);">V</span>
<span class="t" style="left:142.08px;top:851px;font-size:11px;color:#000;transform:scaleX(0.9553);">S</span>
<div class="a" style="left:157px;top:850px;width:16px;height:69px;background:#919191"></div>
<div class="a" style="left:157px;top:850px;width:16px;height:15px;background:linear-gradient(#e8e8e8,#c8c8c8);border-top:1px solid #fafafa;border-left:1px solid #d8d8d8;border-right:1px solid #b8b8b8;border-bottom:1px solid #4a4a4a;"></div>
<svg style="left:160px;top:853px;width:10px;height:9px" viewBox="0 0 10 9"><path d="M0.8 8L5 0.9L9.2 8Z" fill="#f4f4f4" stroke="#a8a8a8" stroke-width="0.7" stroke-dasharray="1 1"/><path d="M0.8 8H9.2" stroke="#f8f8f8" stroke-width="0.9"/></svg>
<div class="a" style="left:157px;top:903.5px;width:16px;height:15.5px;background:linear-gradient(#e8e8e8,#c8c8c8);border-top:1px solid #fafafa;border-left:1px solid #d8d8d8;border-right:1px solid #b8b8b8;border-bottom:1px solid #8a8a8a;box-shadow:0 -1px 0 #4a4a4a;"></div>
<svg style="left:160px;top:907px;width:10px;height:9px" viewBox="0 0 10 9"><path d="M0.8 1L5 8.1L9.2 1Z" fill="#f4f4f4" stroke="#a8a8a8" stroke-width="0.7" stroke-dasharray="1 1"/><path d="M0.8 1H9.2" stroke="#f8f8f8" stroke-width="0.9"/></svg>
<div class="a" style="left:158px;top:865px;width:14px;height:19px;background:linear-gradient(90deg,#b2b2b2,#c6c6c6 40%,#b6b6b6);border-radius:7px;border:1px solid #a8a8a8;border-bottom-color:#888"></div>
<div class="a" style="left:161.5px;top:871px;width:7px;height:1px;background:#8a8a8a"></div>
<div class="a" style="left:161.5px;top:873px;width:7px;height:1px;background:#8a8a8a"></div>
<div class="a" style="left:161.5px;top:875px;width:7px;height:1px;background:#8a8a8a"></div>
<div class="a" style="left:161.5px;top:877px;width:7px;height:1px;background:#8a8a8a"></div>
<div class="a" style="left:12px;top:868px;width:1px;height:51px;background-image:linear-gradient(#444 50%,transparent 50%);background-size:1px 2px"></div>
<span class="t" style="left:24.37px;top:868px;font-size:11px;color:#111;transform:scaleX(1.0358);">Instances</span>
<div class="a" style="left:13px;top:875.7px;width:9px;height:1px;background-image:linear-gradient(90deg,#444 50%,transparent 50%);background-size:2px 1px"></div>
<div class="a" style="left:119.2px;top:870.6px;width:12px;height:11.5px;background:linear-gradient(#fbfbfb,#e6e6e6);border:1px solid #d2d2d2;border-bottom:1.5px solid #4c4c4c;border-radius:2px"></div><svg style="left:119.2px;top:870.6px;width:13px;height:11px" viewBox="0 0 13 11"><path d="M2.9 4.1L5.7 3.5L6.7 6.1L10.6 0.5L12.3 1.9L6.6 10.4Z" fill="#d40000"/></svg>
<div class="a" style="left:141.2px;top:870.6px;width:12px;height:11.5px;background:linear-gradient(#fbfbfb,#e6e6e6);border:1px solid #d2d2d2;border-bottom:1.5px solid #4c4c4c;border-radius:2px"></div><svg style="left:141.2px;top:870.6px;width:13px;height:11px" viewBox="0 0 13 11"><path d="M2.9 4.1L5.7 3.5L6.7 6.1L10.6 0.5L12.3 1.9L6.6 10.4Z" fill="#d40000"/></svg>
<span class="t" style="left:24.50px;top:885px;font-size:11px;color:#111;transform:scaleX(1.0227);">Pins</span>
<div class="a" style="left:13px;top:892.7px;width:9px;height:1px;background-image:linear-gradient(90deg,#444 50%,transparent 50%);background-size:2px 1px"></div>
<div class="a" style="left:119.2px;top:887.6px;width:12px;height:11.5px;background:linear-gradient(#fbfbfb,#e6e6e6);border:1px solid #d2d2d2;border-bottom:1.5px solid #4c4c4c;border-radius:2px"></div><svg style="left:119.2px;top:887.6px;width:13px;height:11px" viewBox="0 0 13 11"><path d="M2.9 4.1L5.7 3.5L6.7 6.1L10.6 0.5L12.3 1.9L6.6 10.4Z" fill="#d40000"/></svg>
<div class="a" style="left:141.2px;top:887.6px;width:12px;height:11.5px;background:linear-gradient(#fbfbfb,#e6e6e6);border:1px solid #d2d2d2;border-bottom:1.5px solid #4c4c4c;border-radius:2px"></div><svg style="left:141.2px;top:887.6px;width:13px;height:11px" viewBox="0 0 13 11"><path d="M2.9 4.1L5.7 3.5L6.7 6.1L10.6 0.5L12.3 1.9L6.6 10.4Z" fill="#d40000"/></svg>
<span class="t" style="left:25.40px;top:902px;font-size:11px;color:#111;transform:scaleX(0.9426);">Vias</span>
<div class="a" style="left:13px;top:909.7px;width:9px;height:1px;background-image:linear-gradient(90deg,#444 50%,transparent 50%);background-size:2px 1px"></div>
<div class="a" style="left:119.2px;top:904.6px;width:12px;height:11.5px;background:linear-gradient(#fbfbfb,#e6e6e6);border:1px solid #d2d2d2;border-bottom:1.5px solid #4c4c4c;border-radius:2px"></div><svg style="left:119.2px;top:904.6px;width:13px;height:11px" viewBox="0 0 13 11"><path d="M2.9 4.1L5.7 3.5L6.7 6.1L10.6 0.5L12.3 1.9L6.6 10.4Z" fill="#d40000"/></svg>
<div class="a" style="left:141.2px;top:904.6px;width:12px;height:11.5px;background:linear-gradient(#fbfbfb,#e6e6e6);border:1px solid #d2d2d2;border-bottom:1.5px solid #4c4c4c;border-radius:2px"></div><svg style="left:141.2px;top:904.6px;width:13px;height:11px" viewBox="0 0 13 11"><path d="M2.9 4.1L5.7 3.5L6.7 6.1L10.6 0.5L12.3 1.9L6.6 10.4Z" fill="#d40000"/></svg>
<div class="a" style="left:0px;top:921px;width:175px;height:23px;background:#efefef"></div>
<div class="a" style="left:55.5px;top:921.5px;width:43px;height:22px;background:#c9c9c9;border:1px solid #a9a9a9;border-top:none"></div>
<div class="a" style="left:0px;top:943px;width:55.5px;height:1px;background:#b5b5b5"></div>
<div class="a" style="left:55px;top:921.5px;width:1px;height:22px;background:#a9a9a9"></div>
<span class="t" style="left:7.94px;top:924px;font-size:11px;color:#222;transform:scaleX(1.0433);">Objects</span>
<span class="t" style="left:63.22px;top:923px;font-size:11px;color:#222;transform:scaleX(1.0468);">Grids</span>
<svg class="a" style="left:181px;top:131px;width:779px;height:813px" viewBox="181 131 779 813" shape-rendering="crispEdges">
<defs><pattern id="st" x="0" y="0" width="4" height="4" patternUnits="userSpaceOnUse"><rect x="1" y="2" width="1" height="1" fill="#00f"/><rect x="3" y="0" width="1" height="1" fill="#00f"/></pattern></defs>
<rect x="181" y="131" width="779" height="813" fill="#000"/>
<rect x="443" y="187" width="256" height="65" fill="url(#st)"/><path d="M443 187h256v65h-256z M444 188v63h254v-63z" fill="#00f" fill-rule="evenodd"/>
<rect x="443" y="219" width="256" height="1" fill="#00f"/>
<rect x="220" y="410" width="65" height="256" fill="url(#st)"/><path d="M220 410h65v256h-65z M221 411v254h63v-254z" fill="#00f" fill-rule="evenodd"/>
<rect x="252" y="410" width="1" height="256" fill="#00f"/>
<rect x="730" y="410" width="65" height="320" fill="url(#st)"/><path d="M730 410h65v320h-65z M731 411v318h63v-318z" fill="#00f" fill-rule="evenodd"/>
<rect x="762" y="410" width="1" height="320" fill="#00f"/>
<rect x="443" y="697" width="320" height="65" fill="url(#st)"/><path d="M443 697h320v65h-320z M444 698v63h318v-63z" fill="#00f" fill-rule="evenodd"/>
<rect x="443" y="729" width="320" height="1" fill="#00f"/>
<rect x="857" y="410" width="65" height="447" fill="url(#st)"/><path d="M857 410h65v447h-65z M858 411v445h63v-445z" fill="#00f" fill-rule="evenodd"/>
<rect x="889" y="410" width="1" height="447" fill="#00f"/>
<rect x="443" y="824" width="447" height="65" fill="url(#st)"/><path d="M443 824h447v65h-447z M444 825v63h445v-63z" fill="#00f" fill-rule="evenodd"/>
<rect x="443" y="856" width="447" height="1" fill="#00f"/>
<rect x="571" y="131" width="1" height="813" fill="#fff"/>
<rect x="181" y="538" width="779" height="1" fill="#fff"/>
<rect x="761" y="709" width="3" height="20" fill="#fff"/>
<rect x="742" y="728" width="20" height="3" fill="#fff"/>
<rect x="888" y="836" width="3" height="20" fill="#fff"/>
<rect x="869" y="855" width="20" height="3" fill="#fff"/>
<path d="M597 597h5v5h-5z M598 598v3h3v-3z" fill="#ff0" fill-rule="evenodd"/>
</svg>
<div class="a" style="left:0px;top:944px;width:960px;height:1px;background:#fbfbfb"></div>
<div class="a" style="left:0px;top:945px;width:960px;height:29px;background:linear-gradient(#e8e8e8,#d6d6d6 50%,#c4c4c4);border-bottom:1px solid #9a9a9a;border-radius:3px 3px 4px 4px"></div>
<div class="a" style="left:4px;top:950px;width:1px;height:18px;background:#808080"></div><div class="a" style="left:5px;top:950px;width:1px;height:18px;background:#ededed"></div><div class="a" style="left:6px;top:950px;width:1px;height:18px;background:#808080"></div><div class="a" style="left:7px;top:950px;width:1px;height:18px;background:#ededed"></div><div class="a" style="left:8px;top:950px;width:1px;height:18px;background:#808080"></div><div class="a" style="left:9px;top:950px;width:1px;height:18px;background:#ededed"></div>
<div class="a" style="left:0px;top:974px;width:960px;height:1px;background:#f4f4f4"></div>
<div class="a" style="left:0px;top:975px;width:960px;height:17px;background:linear-gradient(#eaeaea,#d4d4d4 50%,#c4c4c4);border-bottom:1px solid #9a9a9a;border-radius:3px 3px 4px 4px"></div>
<div class="a" style="left:4px;top:980px;width:1px;height:6px;background:#808080"></div><div class="a" style="left:5px;top:980px;width:1px;height:6px;background:#ededed"></div>
<div class="a" style="left:6px;top:980px;width:1px;height:6px;background:#808080"></div><div class="a" style="left:7px;top:980px;width:1px;height:6px;background:#ededed"></div>
<div class="a" style="left:8px;top:980px;width:1px;height:6px;background:#808080"></div><div class="a" style="left:9px;top:980px;width:1px;height:6px;background:#ededed"></div>
<span class="t" style="left:9.91px;top:974px;font-size:11px;color:#222;transform:scaleX(1.0442);">mouse L:</span>
<span class="t" style="left:473.74px;top:974px;font-size:11px;color:#222;transform:scaleX(1.1992);">M:</span>
<span class="t" style="left:941.58px;top:974px;font-size:11px;color:#222;transform:scaleX(1.0405);">R:</span>
<div class="a" style="left:0px;top:992px;width:960px;height:20px;background:#f0f0f0"></div>
<div class="a" style="left:0px;top:992px;width:28px;height:20px;background:#fadadd"></div>
<div class="a" style="left:28px;top:993px;width:1px;height:19px;background:#555"></div>
<span class="t" style="left:2.17px;top:995px;font-size:11px;transform:scaleX(1.0053);">3(4)</span>
<span class="t" style="left:37.54px;top:995px;font-size:11px;transform:scaleX(1.0545);">&gt;</span>
<div class="a" style="left:904px;top:995px;width:1px;height:16px;background:#555"></div>
<span class="t" style="left:911.92px;top:995px;font-size:11px;transform:scaleX(1.0586);">Cmd:</span>
<div class="a" style="left:948px;top:995.5px;width:8px;height:15px;background:#9a9a9a;border:1px solid #555;border-right-color:#fff;border-bottom-color:#fff"></div>
<div class="a" style="left:0px;top:1012px;width:960px;height:2px;background:#4a4a4a"></div>
</div></body></html>
